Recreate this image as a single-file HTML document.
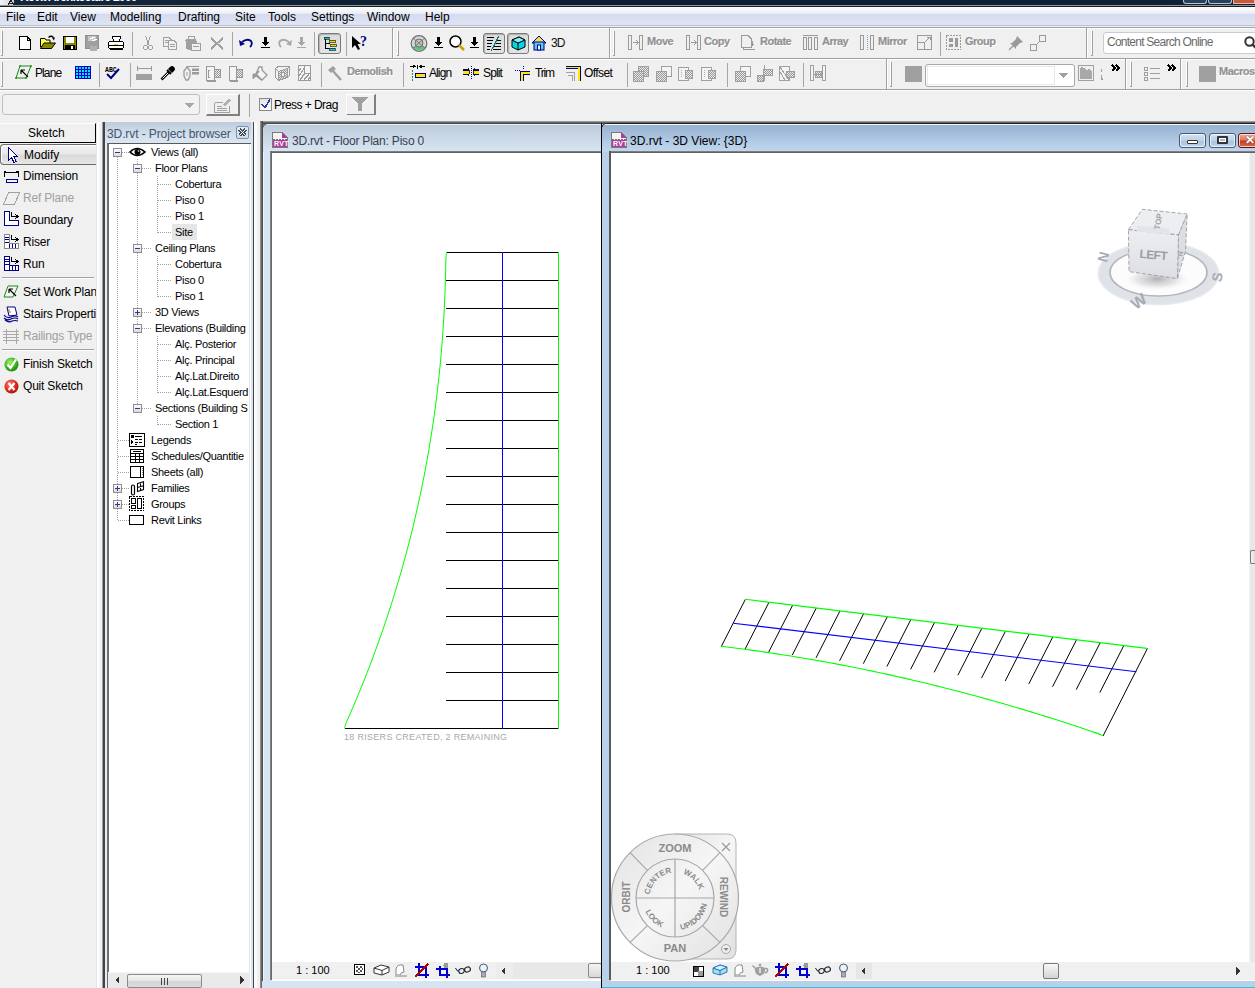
<!DOCTYPE html>
<html><head><meta charset="utf-8">
<style>
*{margin:0;padding:0;box-sizing:border-box}
html,body{width:1255px;height:988px;overflow:hidden;background:#f0f0f0;font-family:"Liberation Sans",sans-serif;font-size:11px;color:#000;position:relative}
.a{position:absolute}
.t{position:absolute;white-space:nowrap;line-height:1}
svg.a{overflow:visible}
</style></head><body>
<svg width="0" height="0" style="position:absolute"><defs><pattern id="dith" width="2" height="2" patternUnits="userSpaceOnUse"><rect width="2" height="2" fill="#e8e8e8"/><rect width="1" height="1" fill="#9a9a9a"/><rect x="1" y="1" width="1" height="1" fill="#9a9a9a"/></pattern></defs></svg>
<div class="a" style="left:0px;top:0px;width:1255px;height:5px;background:linear-gradient(90deg,#13263a,#0f2034 40%,#0d1f33 70%,#102338)"></div>
<div class="a" style="left:0px;top:0px;width:14px;height:5px;background:linear-gradient(90deg,#f4f4f4,#d0d0d0)"></div>
<svg class="a" style="left:5px;top:0px;" width="9" height="5" viewBox="0 0 9 5" shape-rendering="crispEdges"><path d="M3,5 L6,0 L9,5 M4,3 H8" stroke="#202020" fill="none"/></svg>
<div class="t" style="left:20px;top:-9px;font-size:12px;color:#fff;font-weight:bold;letter-spacing:-0.7px">Revit Architecture 2009</div>
<div class="a" style="left:0px;top:5px;width:1255px;height:1px;background:#8e989f"></div>
<div class="a" style="left:0px;top:6px;width:1255px;height:1px;background:#1c1c1c"></div>
<div class="a" style="left:1183px;top:0px;width:24px;height:4px;background:#28405c;border:1px solid #b8c4d0;border-top:none;border-radius:0 0 3px 3px"></div>
<div class="a" style="left:1208px;top:0px;width:24px;height:4px;background:#28405c;border:1px solid #b8c4d0;border-top:none;border-radius:0 0 3px 3px"></div>
<div class="a" style="left:1233px;top:0px;width:22px;height:4px;background:#c85a3a;border:1px solid #e8c0b0;border-top:none"></div>
<div class="a" style="left:0px;top:7px;width:1255px;height:7px;background:linear-gradient(#ffffff,#f4f6fb 50%,#e6eaf5)"></div>
<div class="a" style="left:0px;top:14px;width:1255px;height:11px;background:linear-gradient(#d5dbee,#dfe5f4)"></div>
<div class="a" style="left:0px;top:25px;width:1255px;height:1px;background:#b9c0d2"></div>
<div class="a" style="left:0px;top:26px;width:1255px;height:1px;background:#f0f0f0"></div>
<div class="a" style="left:0px;top:27px;width:1255px;height:1px;background:#a0a0a0"></div>
<div class="a" style="left:0px;top:28px;width:1255px;height:1px;background:#ffffff"></div>
<div class="t" style="left:6px;top:11px;font-size:12px;">File</div>
<div class="t" style="left:37px;top:11px;font-size:12px;">Edit</div>
<div class="t" style="left:70px;top:11px;font-size:12px;">View</div>
<div class="t" style="left:110px;top:11px;font-size:12px;">Modelling</div>
<div class="t" style="left:178px;top:11px;font-size:12px;">Drafting</div>
<div class="t" style="left:235px;top:11px;font-size:12px;">Site</div>
<div class="t" style="left:268px;top:11px;font-size:12px;">Tools</div>
<div class="t" style="left:311px;top:11px;font-size:12px;">Settings</div>
<div class="t" style="left:367px;top:11px;font-size:12px;">Window</div>
<div class="t" style="left:425px;top:11px;font-size:12px;">Help</div>
<div class="a" style="left:0px;top:58px;width:1255px;height:1px;background:#a0a0a0"></div>
<div class="a" style="left:0px;top:59px;width:1255px;height:1px;background:#ffffff"></div>
<div class="a" style="left:0px;top:89px;width:1255px;height:1px;background:#a0a0a0"></div>
<div class="a" style="left:0px;top:90px;width:1255px;height:1px;background:#ffffff"></div>
<div class="a" style="left:1px;top:31px;width:1px;height:25px;background:#fff"></div>
<div class="a" style="left:2px;top:31px;width:1px;height:25px;background:#a0a0a0"></div>
<div class="a" style="left:1px;top:55px;width:2px;height:1px;background:#a0a0a0"></div>
<svg class="a" style="left:19px;top:36px;" width="12" height="14" viewBox="0 0 12 14" shape-rendering="crispEdges"><path d="M0.5,0.5 H8 L11.5,4 V13.5 H0.5 Z" fill="#fff" stroke="#000"/><path d="M8,0.5 V4 H11.5" fill="none" stroke="#000"/></svg>
<svg class="a" style="left:40px;top:35px;" width="16" height="15" viewBox="0 0 16 15"><path d="M0.5,3.5 H5 L6,5 H10 V9 L0.5,12 Z" fill="#ffff50" stroke="#000"/><path d="M0.5,13.5 L4,8 H15.5 L11.5,13.5 Z" fill="#8a8a00" stroke="#000" stroke-linejoin="round"/><path d="M8.5,2.5 Q11,0 13.5,2.5" fill="none" stroke="#000" stroke-width="1.2"/><path d="M12,2.5 L15,2.5 L13.8,5.5 Z" fill="#000"/></svg>
<svg class="a" style="left:63px;top:36px;" width="15" height="15" viewBox="0 0 15 15" shape-rendering="crispEdges"><rect x="0.5" y="0.5" width="13" height="13" fill="#8a8a00" stroke="#000"/><rect x="3" y="1" width="8" height="6" fill="#fff"/><rect x="2" y="9" width="10" height="5" fill="#000"/><rect x="8" y="10" width="2" height="3" fill="#fff"/></svg>
<svg class="a" style="left:85px;top:35px;" width="16" height="17" viewBox="0 0 16 17" shape-rendering="crispEdges"><rect x="0.5" y="0.5" width="13" height="13" fill="#a0a0a0" stroke="#909090"/><rect x="3" y="1" width="8" height="5" fill="#c8c8c8"/><path d="M5,4 L10,2 M7,6 L12,4" stroke="#fff"/><rect x="5" y="11" width="7" height="5" fill="#b0b0b0"/></svg>
<svg class="a" style="left:108px;top:36px;" width="17" height="15" viewBox="0 0 17 15" shape-rendering="crispEdges"><path d="M4.5,0.5 H12.5 L11.5,5.5 H5.5 Z" fill="#fff" stroke="#000"/><rect x="0.5" y="5.5" width="15" height="7" rx="2" fill="#fff" stroke="#000"/><rect x="1" y="9" width="15" height="1" fill="#000"/><rect x="6" y="8" width="4" height="1" fill="#e8d000"/><rect x="2" y="12" width="13" height="2" fill="#000"/></svg>
<div class="a" style="left:132px;top:32px;width:1px;height:24px;background:#a7a7a7"></div>
<svg class="a" style="left:143px;top:36px;" width="10" height="15" viewBox="0 0 10 15" shape-rendering="crispEdges"><path d="M2.5,0 L6,9 M7.5,0 L4,9" stroke="#a0a0a0"/><circle cx="2.5" cy="11.5" r="2" fill="none" stroke="#a0a0a0"/><circle cx="7.5" cy="11.5" r="2" fill="none" stroke="#a0a0a0"/></svg>
<svg class="a" style="left:163px;top:37px;" width="15" height="13" viewBox="0 0 15 13" shape-rendering="crispEdges"><path d="M0.5,0.5 H6 L8,2.5 V9.5 H0.5 Z" fill="#f0f0f0" stroke="#a0a0a0"/><path d="M5.5,3.5 H11 L13.5,6 V12.5 H5.5 Z" fill="#f0f0f0" stroke="#a0a0a0"/><path d="M2,3.5 H5 M2,5.5 H5 M7,7.5 H12 M7,9.5 H12" stroke="#a0a0a0"/></svg>
<svg class="a" style="left:185px;top:36px;" width="16" height="15" viewBox="0 0 16 15" shape-rendering="crispEdges"><rect x="0.5" y="2.5" width="11" height="11" rx="2" fill="#a0a0a0"/><rect x="3" y="0.5" width="6" height="3" fill="#f0f0f0" stroke="#a0a0a0"/><rect x="6.5" y="7.5" width="9" height="7" fill="#f0f0f0" stroke="#a0a0a0"/><path d="M8,10.5 H14" stroke="#a0a0a0"/></svg>
<svg class="a" style="left:210px;top:37px;" width="14" height="13" viewBox="0 0 14 13" shape-rendering="crispEdges"><path d="M1,1 L13,12 M13,1 L1,12" stroke="#a0a0a0" stroke-width="2"/></svg>
<div class="a" style="left:232px;top:32px;width:1px;height:24px;background:#a7a7a7"></div>
<svg class="a" style="left:239px;top:38px;" width="15" height="10" viewBox="0 0 15 10"><path d="M3,4 Q8,0 12,3 Q14,6 11,9" fill="none" stroke="#00008a" stroke-width="1.8"/><path d="M0,2 L1,8 L6,6 Z" fill="#00008a"/></svg>
<svg class="a" style="left:261px;top:37px;" width="9" height="12" viewBox="0 0 9 12" shape-rendering="crispEdges"><rect x="3" y="0" width="3" height="5" fill="#000"/><path d="M0.5,5 H8.5 L4.5,9 Z" fill="#000"/><rect x="0" y="10" width="9" height="1" fill="#000"/></svg>
<svg class="a" style="left:277px;top:38px;" width="15" height="10" viewBox="0 0 15 10"><path d="M12,4 Q7,0 3,3 Q1,6 4,9" fill="none" stroke="#a8a8a8" stroke-width="1.8"/><path d="M15,2 L14,8 L9,6 Z" fill="#a8a8a8"/></svg>
<svg class="a" style="left:297px;top:37px;" width="9" height="12" viewBox="0 0 9 12" shape-rendering="crispEdges"><rect x="3" y="0" width="3" height="5" fill="#a8a8a8"/><path d="M0.5,5 H8.5 L4.5,9 Z" fill="#a8a8a8"/><rect x="0" y="10" width="9" height="1" fill="#a8a8a8"/></svg>
<div class="a" style="left:314px;top:32px;width:1px;height:24px;background:#a7a7a7"></div>
<div class="a" style="left:318px;top:33px;width:23px;height:21px;background:linear-gradient(#dcdcdc,#e4e4e4);border:1px solid #7a7a7a;border-radius:3px;box-shadow:inset 1px 1px 1px #b0b0b0"></div>
<svg class="a" style="left:322px;top:36px;" width="16" height="15" viewBox="0 0 16 15" shape-rendering="crispEdges"><path d="M3.5,2 V13 M3.5,7.5 H8 M3.5,12.5 H8" stroke="#000"/><rect x="2" y="1" width="5" height="2" fill="#00c8e8" stroke="#000" stroke-width="0.6"/><rect x="7" y="4" width="6" height="2" fill="#e8e800" stroke="#000" stroke-width="0.6"/><rect x="8" y="8" width="6" height="2" fill="#e8e800" stroke="#000" stroke-width="0.6"/><rect x="7" y="12" width="6" height="2" fill="#00c8e8" stroke="#000" stroke-width="0.6"/></svg>
<div class="a" style="left:346px;top:32px;width:1px;height:24px;background:#a7a7a7"></div>
<svg class="a" style="left:351px;top:35px;" width="19" height="16" viewBox="0 0 19 16"><path d="M1,1 L1,13 L4,10 L7,15 L9,14 L6.5,9 L10,9 Z" fill="#000"/><text x="9" y="11" font-family="Liberation Serif" font-weight="bold" font-size="14" fill="#00008a">?</text></svg>
<div class="a" style="left:392px;top:28px;width:1px;height:30px;background:#a0a0a0"></div>
<div class="a" style="left:393px;top:28px;width:1px;height:30px;background:#fff"></div>
<div class="a" style="left:397px;top:31px;width:1px;height:25px;background:#fff"></div>
<div class="a" style="left:398px;top:31px;width:1px;height:25px;background:#a0a0a0"></div>
<div class="a" style="left:397px;top:55px;width:2px;height:1px;background:#a0a0a0"></div>
<svg class="a" style="left:410px;top:35px;" width="18" height="17" viewBox="0 0 18 17"><circle cx="9" cy="8.5" r="7.8" fill="#d8d8d8" stroke="#707070" stroke-width="1.2"/><path d="M3,13 Q9,17 15,13 L13,11 Q9,13 5,11 Z" fill="#50c878"/><circle cx="9" cy="8" r="4" fill="#c0c0c0" stroke="#707070"/><path d="M3,3 L15,13 M15,3 L3,13" stroke="#707070" stroke-width="0.8"/></svg>
<svg class="a" style="left:434px;top:37px;" width="9" height="12" viewBox="0 0 9 12" shape-rendering="crispEdges"><rect x="3" y="0" width="3" height="5" fill="#000"/><path d="M0.5,5 H8.5 L4.5,9 Z" fill="#000"/><rect x="0" y="10" width="9" height="1" fill="#000"/></svg>
<svg class="a" style="left:449px;top:35px;" width="16" height="16" viewBox="0 0 16 16"><circle cx="6.5" cy="6.5" r="5.5" fill="#fff" stroke="#000" stroke-width="1.5"/><path d="M10,10 L15,15" stroke="#c8a000" stroke-width="2.5"/></svg>
<svg class="a" style="left:470px;top:37px;" width="9" height="12" viewBox="0 0 9 12" shape-rendering="crispEdges"><rect x="3" y="0" width="3" height="5" fill="#000"/><path d="M0.5,5 H8.5 L4.5,9 Z" fill="#000"/><rect x="0" y="10" width="9" height="1" fill="#000"/></svg>
<div class="a" style="left:483px;top:33px;width:22px;height:21px;background:linear-gradient(#dcdcdc,#e4e4e4);border:1px solid #7a7a7a;border-radius:3px;box-shadow:inset 1px 1px 1px #b0b0b0"></div>
<svg class="a" style="left:487px;top:36px;" width="15" height="15" viewBox="0 0 15 15" shape-rendering="crispEdges"><path d="M0,1.5 H7 M0,4.5 H6 M0,7.5 H5 M0,10.5 H4 M0,13.5 H3 M9,4.5 H14 M8,7.5 H14 M7,10.5 H14 M6,13.5 H14" stroke="#000" stroke-width="1.2"/><path d="M12,0 L4,15" stroke="#1a7a7a" stroke-width="1.2"/></svg>
<div class="a" style="left:507px;top:33px;width:22px;height:21px;background:linear-gradient(#dcdcdc,#e4e4e4);border:1px solid #7a7a7a;border-radius:3px;box-shadow:inset 1px 1px 1px #b0b0b0"></div>
<svg class="a" style="left:511px;top:36px;" width="15" height="15" viewBox="0 0 15 15"><path d="M1,4 L8,1 L14,4 L14,11 L7,14 L1,11 Z" fill="#00d8e8" stroke="#000"/><path d="M1,4 L7,7 L14,4 M7,7 V14" fill="none" stroke="#000"/><path d="M1,4 L8,1 L14,4 L7,7 Z" fill="#7ff0f8" stroke="#000"/></svg>
<svg class="a" style="left:531px;top:35px;" width="16" height="17" viewBox="0 0 16 17"><path d="M1,8 L8,1 L15,8 Z" fill="#f0e060" stroke="#00008a"/><rect x="3" y="7" width="10" height="8" fill="#58c8f0" stroke="#00008a"/><rect x="6.5" y="10" width="3" height="5" fill="#fff" stroke="#00008a"/></svg>
<div class="t" style="left:551px;top:37px;font-size:12px;color:#111;letter-spacing:-1px">3D</div>
<div class="a" style="left:609px;top:28px;width:1px;height:30px;background:#a0a0a0"></div>
<div class="a" style="left:610px;top:28px;width:1px;height:30px;background:#fff"></div>
<div class="a" style="left:613px;top:31px;width:1px;height:25px;background:#fff"></div>
<div class="a" style="left:614px;top:31px;width:1px;height:25px;background:#a0a0a0"></div>
<div class="a" style="left:613px;top:55px;width:2px;height:1px;background:#a0a0a0"></div>
<svg class="a" style="left:628px;top:35px;" width="16" height="16" viewBox="0 0 16 16" shape-rendering="crispEdges"><rect x="0.5" y="0.5" width="3" height="14" fill="#f0f0f0" stroke="#9a9a9a"/><rect x="11.5" y="0.5" width="3" height="14" fill="#f0f0f0" stroke="#9a9a9a"/><path d="M5,7.5 H10 M8,5 L10,7.5 L8,10" fill="none" stroke="#9a9a9a"/></svg>
<div class="t" style="left:647px;top:36px;font-size:11px;color:#929292;font-weight:bold;letter-spacing:-0.5px;-webkit-text-stroke:0.2px #929292;text-shadow:1px 1px 0 #fff">Move</div>
<svg class="a" style="left:686px;top:35px;" width="16" height="16" viewBox="0 0 16 16" shape-rendering="crispEdges"><rect x="0.5" y="0.5" width="3" height="14" fill="#f0f0f0" stroke="#9a9a9a"/><rect x="11.5" y="0.5" width="3" height="14" fill="#f0f0f0" stroke="#9a9a9a"/><path d="M5,7.5 H10 M8,5 L10,7.5 L8,10" fill="none" stroke="#9a9a9a"/></svg>
<div class="t" style="left:704px;top:36px;font-size:11px;color:#929292;font-weight:bold;letter-spacing:-0.5px;-webkit-text-stroke:0.2px #929292;text-shadow:1px 1px 0 #fff">Copy</div>
<svg class="a" style="left:741px;top:35px;" width="16" height="16" viewBox="0 0 16 16" shape-rendering="crispEdges"><path d="M0.5,0.5 H7 L10.5,4 V12.5 H0.5 Z" fill="#f0f0f0" stroke="#9a9a9a"/><path d="M2.5,12.5 V14.5 H13.5" fill="none" stroke="#9a9a9a"/><path d="M11,6 V11 L13,9" fill="none" stroke="#9a9a9a"/></svg>
<div class="t" style="left:760px;top:36px;font-size:11px;color:#929292;font-weight:bold;letter-spacing:-0.5px;-webkit-text-stroke:0.2px #929292;text-shadow:1px 1px 0 #fff">Rotate</div>
<svg class="a" style="left:803px;top:35px;" width="16" height="16" viewBox="0 0 16 16" shape-rendering="crispEdges"><rect x="0.5" y="2.5" width="3" height="12" fill="#f0f0f0" stroke="#9a9a9a"/><rect x="5.5" y="2.5" width="3" height="12" fill="#f0f0f0" stroke="#9a9a9a"/><rect x="11.5" y="2.5" width="3" height="12" fill="#f0f0f0" stroke="#9a9a9a"/><path d="M0,0.5 H15" stroke="#9a9a9a"/></svg>
<div class="t" style="left:822px;top:36px;font-size:11px;color:#929292;font-weight:bold;letter-spacing:-0.5px;-webkit-text-stroke:0.2px #929292;text-shadow:1px 1px 0 #fff">Array</div>
<svg class="a" style="left:860px;top:35px;" width="15" height="16" viewBox="0 0 15 16" shape-rendering="crispEdges"><rect x="0.5" y="0.5" width="3" height="14" fill="#f0f0f0" stroke="#9a9a9a"/><rect x="10.5" y="0.5" width="3" height="14" fill="#f0f0f0" stroke="#9a9a9a"/><path d="M7,0 V15" stroke="#9a9a9a" stroke-dasharray="1,1"/></svg>
<div class="t" style="left:878px;top:36px;font-size:11px;color:#929292;font-weight:bold;letter-spacing:-0.5px;-webkit-text-stroke:0.2px #929292;text-shadow:1px 1px 0 #fff">Mirror</div>
<svg class="a" style="left:917px;top:35px;" width="16" height="16" viewBox="0 0 16 16" shape-rendering="crispEdges"><rect x="0.5" y="0.5" width="14" height="14" fill="none" stroke="#9a9a9a"/><path d="M0.5,7.5 H7.5 V14.5" fill="none" stroke="#9a9a9a"/><path d="M8,7 L13,2 M10,2 H13 V5" fill="none" stroke="#9a9a9a"/></svg>
<div class="a" style="left:940px;top:32px;width:1px;height:24px;background:#a7a7a7"></div>
<svg class="a" style="left:946px;top:35px;" width="16" height="16" viewBox="0 0 16 16" shape-rendering="crispEdges"><rect x="0.5" y="0.5" width="14" height="14" fill="none" stroke="#9a9a9a" stroke-dasharray="2,1"/><rect x="3" y="3" width="4" height="4" fill="#9a9a9a"/><rect x="3" y="9" width="4" height="3" fill="#9a9a9a"/><rect x="9" y="3" width="3" height="9" fill="#9a9a9a"/></svg>
<div class="t" style="left:965px;top:36px;font-size:11px;color:#929292;font-weight:bold;letter-spacing:-0.5px;-webkit-text-stroke:0.2px #929292;text-shadow:1px 1px 0 #fff">Group</div>
<svg class="a" style="left:1008px;top:35px;" width="16" height="16" viewBox="0 0 16 16"><path d="M9,1 L15,7 L12,8 L8,12 L8,14 L2,8 L4,8 L8,4 Z" fill="#9a9a9a"/><path d="M5,11 L1,15" stroke="#9a9a9a" stroke-width="1.2"/></svg>
<svg class="a" style="left:1030px;top:35px;" width="17" height="17" viewBox="0 0 17 17" shape-rendering="crispEdges"><rect x="0.5" y="9.5" width="6" height="6" fill="#f0f0f0" stroke="#9a9a9a"/><rect x="9.5" y="0.5" width="6" height="6" fill="#f0f0f0" stroke="#9a9a9a"/><path d="M6,10 L10,6" stroke="#9a9a9a"/></svg>
<div class="a" style="left:1086px;top:28px;width:1px;height:30px;background:#a0a0a0"></div>
<div class="a" style="left:1087px;top:28px;width:1px;height:30px;background:#fff"></div>
<div class="a" style="left:1091px;top:31px;width:1px;height:25px;background:#fff"></div>
<div class="a" style="left:1092px;top:31px;width:1px;height:25px;background:#a0a0a0"></div>
<div class="a" style="left:1091px;top:55px;width:2px;height:1px;background:#a0a0a0"></div>
<div class="a" style="left:1103px;top:32px;width:160px;height:22px;background:#fff;border:1px solid #c8ccd4;border-radius:3px"></div>
<div class="t" style="left:1107px;top:36px;font-size:12px;color:#6a6a6a;letter-spacing:-0.75px">Content Search Online</div>
<svg class="a" style="left:1244px;top:36px;" width="14" height="14" viewBox="0 0 14 14"><circle cx="5.5" cy="5.5" r="4.2" fill="none" stroke="#333" stroke-width="2"/><path d="M8.5,8.5 L13,13" stroke="#333" stroke-width="2.4"/></svg>
<div class="a" style="left:1px;top:62px;width:1px;height:25px;background:#fff"></div>
<div class="a" style="left:2px;top:62px;width:1px;height:25px;background:#a0a0a0"></div>
<div class="a" style="left:1px;top:86px;width:2px;height:1px;background:#a0a0a0"></div>
<svg class="a" style="left:15px;top:65px;" width="17" height="14" viewBox="0 0 17 14"><path d="M5,1 L16,1 L11,13 L1,13 Z" fill="none" stroke="#1a8a1a" stroke-width="1"/><circle cx="5" cy="1" r="0.9" fill="#1a8a1a"/><circle cx="16" cy="1" r="0.9" fill="#1a8a1a"/><circle cx="11" cy="13" r="0.9" fill="#1a8a1a"/><circle cx="1" cy="13" r="0.9" fill="#1a8a1a"/><path d="M6,5 L13,12 M6,5 L6,9 M6,5 L10,5" stroke="#000" stroke-width="1.2" fill="none"/></svg>
<div class="t" style="left:35px;top:67px;font-size:12px;letter-spacing:-0.9px">Plane</div>
<svg class="a" style="left:75px;top:66px;" width="16" height="13" viewBox="0 0 16 13" shape-rendering="crispEdges"><rect x="0" y="0" width="16" height="13" fill="#00e8ff"/><path d="M0,0.5 H16 M0,3.5 H16 M0,6.5 H16 M0,9.5 H16 M0,12.5 H16 M0.5,0 V13 M3.5,0 V13 M6.5,0 V13 M9.5,0 V13 M12.5,0 V13 M15.5,0 V13" stroke="#0000c8"/></svg>
<div class="a" style="left:99px;top:63px;width:1px;height:24px;background:#a7a7a7"></div>
<svg class="a" style="left:105px;top:66px;" width="16" height="14" viewBox="0 0 16 14"><text x="0" y="5.5" font-family="Liberation Mono" font-size="6.5" font-weight="bold" fill="#000">ABC</text><path d="M2,8 L6,12 L14,3" fill="none" stroke="#00008a" stroke-width="2"/></svg>
<div class="a" style="left:130px;top:63px;width:1px;height:24px;background:#a7a7a7"></div>
<svg class="a" style="left:136px;top:66px;" width="17" height="15" viewBox="0 0 17 15" shape-rendering="crispEdges"><path d="M1,0 V5 M15,0 V5 M1,2.5 H15" stroke="#9a9a9a"/><rect x="0" y="8" width="16" height="6" fill="#a0a0a0"/></svg>
<svg class="a" style="left:160px;top:65px;" width="16" height="16" viewBox="0 0 16 16"><path d="M1.5,14.5 L9,7" stroke="#000" stroke-width="2.6"/><path d="M2.5,13.5 L8.5,7.5" stroke="#fff" stroke-width="1"/><path d="M10,2 Q12,0 14,2 Q16,4 14,6 L12,8 L8,4 Z" fill="#000"/><path d="M7,5 L11,9" stroke="#000" stroke-width="2"/></svg>
<svg class="a" style="left:183px;top:65px;" width="16" height="17" viewBox="0 0 16 17"><path d="M4,2 L7,6 L7,11 L5,15 L3,15 L1,11 L1,6 Z" fill="#f4f4f4" stroke="#9a9a9a" stroke-width="1.3"/><path d="M4,7 V11" stroke="#9a9a9a"/><path d="M3.5,1.5 H16" stroke="#9a9a9a"/><rect x="9" y="3.5" width="7" height="2.5" fill="#9a9a9a"/><rect x="9" y="7" width="7" height="2.5" fill="#9a9a9a"/></svg>
<svg class="a" style="left:206px;top:66px;" width="15" height="16" viewBox="0 0 15 16" shape-rendering="crispEdges"><rect x="0.5" y="0.5" width="8" height="14" fill="#f4f4f4" stroke="#9a9a9a"/><rect x="1" y="14" width="9" height="1.5" fill="#9a9a9a"/><path d="M3.5,4 H2.5 V11 H3.5" fill="none" stroke="#9a9a9a"/><rect x="8.5" y="3.5" width="6" height="8" fill="url(#dith)" stroke="#9a9a9a"/></svg>
<svg class="a" style="left:229px;top:66px;" width="15" height="16" viewBox="0 0 15 16" shape-rendering="crispEdges"><rect x="0.5" y="0.5" width="7" height="14" fill="#f4f4f4" stroke="#9a9a9a"/><rect x="1" y="14" width="8" height="1.5" fill="#9a9a9a"/><rect x="7.5" y="3.5" width="6" height="8" fill="url(#dith)" stroke="#9a9a9a"/></svg>
<svg class="a" style="left:252px;top:65px;" width="16" height="17" viewBox="0 0 16 17"><path d="M7,2 L10,2 L10,5 L15,10 L10,15 L4,9 Z" fill="#f4f4f4" stroke="#9a9a9a" stroke-width="1.3"/><path d="M4,9 L1,9 L1,14 L4,11 L9,15 L10,15" fill="#9a9a9a" stroke="#9a9a9a"/><path d="M4,9 L7,6" stroke="#9a9a9a" stroke-width="2"/></svg>
<svg class="a" style="left:275px;top:65px;" width="16" height="17" viewBox="0 0 16 17" shape-rendering="crispEdges"><path d="M0.5,3.5 L3.5,6.5 V15.5 L0.5,12.5 Z" fill="#f4f4f4" stroke="#9a9a9a"/><path d="M3.5,6.5 L12.5,3.5 V12.5 L3.5,15.5 Z" fill="url(#dith)" stroke="#9a9a9a"/><path d="M12.5,3.5 L14.5,1.5 V10.5 L12.5,12.5" fill="#f4f4f4" stroke="#9a9a9a"/><path d="M0.5,3.5 L3,1.5 L14.5,1.5" fill="none" stroke="#9a9a9a"/><rect x="6.5" y="7.5" width="3" height="4" fill="#f4f4f4" stroke="#9a9a9a"/></svg>
<svg class="a" style="left:298px;top:65px;" width="15" height="17" viewBox="0 0 15 17" shape-rendering="crispEdges"><rect x="0.5" y="0.5" width="12" height="15" fill="#f4f4f4" stroke="#9a9a9a" stroke-width="1.2"/><path d="M6.5,1 V8.5 H12" fill="none" stroke="#9a9a9a"/><path d="M1,6 L3,3 M1,11 L6,3.5 M2,15 L7,8 M6,15 L11,9 M10,15 L12,12" stroke="#9a9a9a" stroke-width="1.2"/></svg>
<div class="a" style="left:321px;top:63px;width:1px;height:24px;background:#a7a7a7"></div>
<svg class="a" style="left:327px;top:66px;" width="15" height="15" viewBox="0 0 15 15"><path d="M1,4 L6,0 L9,3 L4,7 Z" fill="#a0a0a0"/><path d="M6,5 L14,14" stroke="#a0a0a0" stroke-width="2.5"/></svg>
<div class="t" style="left:347px;top:66px;font-size:11px;color:#929292;font-weight:bold;letter-spacing:-0.5px;-webkit-text-stroke:0.2px #929292;text-shadow:1px 1px 0 #fff">Demolish</div>
<div class="a" style="left:403px;top:63px;width:1px;height:24px;background:#a7a7a7"></div>
<svg class="a" style="left:410px;top:65px;" width="16" height="16" viewBox="0 0 16 16" shape-rendering="crispEdges"><path d="M0,1.5 H5 M3,0 L5,1.5 L3,3 M15,1.5 H10 M12,0 L10,1.5 L12,3 M7.5,0 V4" fill="none" stroke="#000"/><rect x="5.5" y="8.5" width="10" height="4" fill="#ffe800" stroke="#00008a"/><path d="M2.5,5 V16" stroke="#1a9a1a" stroke-dasharray="2,1"/></svg>
<div class="t" style="left:429px;top:67px;font-size:12px;letter-spacing:-0.9px">Align</div>
<svg class="a" style="left:463px;top:66px;" width="17" height="14" viewBox="0 0 17 14" shape-rendering="crispEdges"><rect x="0" y="3" width="6" height="2" fill="#00008a"/><rect x="0" y="5" width="6" height="3" fill="#ffe800"/><rect x="0" y="8" width="6" height="1" fill="#00008a"/><rect x="10" y="3" width="6" height="2" fill="#00008a"/><rect x="10" y="5" width="6" height="3" fill="#ffe800"/><rect x="10" y="8" width="6" height="1" fill="#00008a"/><path d="M8.5,0 V14" stroke="#00008a" stroke-dasharray="1,1"/><path d="M5,2 L7,6 L5,10 M12,2 L10,6 L12,10" fill="none" stroke="#000" stroke-width="0.8"/></svg>
<div class="t" style="left:483px;top:67px;font-size:12px;letter-spacing:-0.85px">Split</div>
<svg class="a" style="left:515px;top:66px;" width="16" height="16" viewBox="0 0 16 16" shape-rendering="crispEdges"><path d="M0,4.5 H5 M8.5,0 V4" stroke="#00008a" stroke-dasharray="1,1"/><path d="M5,5 H15 V8 H8 V15 H5 Z" fill="#ffe800"/><path d="M5,5.5 H15 M5.5,5 V15 M8,8.5 H15 M8.5,8 V15" stroke="#00008a"/></svg>
<div class="t" style="left:535px;top:67px;font-size:12px;letter-spacing:-1.2px">Trim</div>
<svg class="a" style="left:566px;top:66px;" width="15" height="16" viewBox="0 0 15 16" shape-rendering="crispEdges"><path d="M0,0.5 H14.5 V15 M0,2.5 H12.5 V15" fill="none" stroke="#00008a" stroke-width="1"/><rect x="0" y="1" width="13" height="1" fill="#ffe800"/><rect x="12" y="1" width="2" height="14" fill="#ffe800"/><path d="M0,6.5 H8.5 V15 M2,9.5 H6.5 V15" fill="none" stroke="#a0a0a0" stroke-width="1.5"/></svg>
<div class="t" style="left:584px;top:67px;font-size:12px;letter-spacing:-0.6px">Offset</div>
<div class="a" style="left:627px;top:63px;width:1px;height:24px;background:#a7a7a7"></div>
<svg class="a" style="left:633px;top:66px;" width="16" height="16" viewBox="0 0 16 16" shape-rendering="crispEdges"><rect x="5.5" y="0.5" width="10" height="10" fill="url(#dith)" stroke="#a0a0a0"/><rect x="0.5" y="5.5" width="10" height="10" fill="url(#dith)" stroke="#a0a0a0"/></svg>
<svg class="a" style="left:656px;top:66px;" width="16" height="16" viewBox="0 0 16 16" shape-rendering="crispEdges"><rect x="5.5" y="0.5" width="10" height="10" fill="#f4f4f4" stroke="#a0a0a0"/><rect x="0.5" y="5.5" width="10" height="10" fill="url(#dith)" stroke="#a0a0a0"/></svg>
<svg class="a" style="left:678px;top:66px;" width="16" height="16" viewBox="0 0 16 16" shape-rendering="crispEdges"><rect x="0.5" y="1.5" width="10" height="13" fill="#f4f4f4" stroke="#a0a0a0"/><rect x="7.5" y="4.5" width="7" height="8" fill="url(#dith)" stroke="#a0a0a0"/><path d="M3.5,4 V12" stroke="#b0b0b0" stroke-dasharray="1,1"/></svg>
<svg class="a" style="left:701px;top:66px;" width="16" height="16" viewBox="0 0 16 16" shape-rendering="crispEdges"><rect x="0.5" y="1.5" width="10" height="13" fill="#f4f4f4" stroke="#a0a0a0"/><rect x="7.5" y="4.5" width="7" height="8" fill="url(#dith)" stroke="#a0a0a0"/><path d="M3.5,4 V12" stroke="#b0b0b0" stroke-dasharray="1,1"/></svg>
<div class="a" style="left:727px;top:63px;width:1px;height:24px;background:#a7a7a7"></div>
<svg class="a" style="left:735px;top:66px;" width="16" height="16" viewBox="0 0 16 16" shape-rendering="crispEdges"><rect x="5.5" y="0.5" width="10" height="10" fill="#f4f4f4" stroke="#a0a0a0"/><rect x="0.5" y="5.5" width="10" height="10" fill="url(#dith)" stroke="#a0a0a0"/></svg>
<svg class="a" style="left:757px;top:65px;" width="16" height="17" viewBox="0 0 16 17" shape-rendering="crispEdges"><path d="M7.5,0 V16" stroke="#a0a0a0"/><rect x="6.5" y="4.5" width="9" height="6" fill="url(#dith)" stroke="#a0a0a0"/><rect x="0.5" y="10.5" width="6" height="6" fill="url(#dith)" stroke="#a0a0a0"/></svg>
<svg class="a" style="left:779px;top:66px;" width="16" height="16" viewBox="0 0 16 16" shape-rendering="crispEdges"><rect x="0.5" y="0.5" width="10" height="14" fill="#f4f4f4" stroke="#a0a0a0"/><path d="M1,1 L10,14 M1,6 L6,14" stroke="#a0a0a0"/><rect x="7.5" y="5.5" width="8" height="6" fill="url(#dith)" stroke="#a0a0a0"/></svg>
<div class="a" style="left:803px;top:63px;width:1px;height:24px;background:#a7a7a7"></div>
<svg class="a" style="left:810px;top:65px;" width="17" height="17" viewBox="0 0 17 17" shape-rendering="crispEdges"><rect x="0.5" y="0.5" width="3" height="15" fill="#f4f4f4" stroke="#a0a0a0"/><rect x="12.5" y="0.5" width="3" height="15" fill="#f4f4f4" stroke="#a0a0a0"/><rect x="5.5" y="6.5" width="6" height="6" fill="url(#dith)" stroke="#a0a0a0"/><path d="M4,9.5 H12" stroke="#a0a0a0"/></svg>
<div class="a" style="left:886px;top:59px;width:1px;height:30px;background:#a0a0a0"></div>
<div class="a" style="left:887px;top:59px;width:1px;height:30px;background:#fff"></div>
<div class="a" style="left:890px;top:62px;width:1px;height:25px;background:#fff"></div>
<div class="a" style="left:891px;top:62px;width:1px;height:25px;background:#a0a0a0"></div>
<div class="a" style="left:890px;top:86px;width:2px;height:1px;background:#a0a0a0"></div>
<div class="a" style="left:905px;top:66px;width:17px;height:16px;background:#a0a0a0"></div>
<div class="a" style="left:925px;top:64px;width:150px;height:23px;background:#fff;border:1px solid #a8a8a8;border-radius:3px"></div>
<div class="a" style="left:927px;top:66px;width:128px;height:19px;background:#fff;border:1px solid #e8e8e8"></div>
<svg class="a" style="left:1058px;top:73px;" width="10" height="6" viewBox="0 0 10 6" shape-rendering="crispEdges"><path d="M0,0 H10 L5,5 Z" fill="#a0a0a0"/></svg>
<svg class="a" style="left:1078px;top:65px;" width="17" height="17" viewBox="0 0 17 17" shape-rendering="crispEdges"><rect x="0.5" y="0.5" width="15" height="15" fill="#f0f0f0" stroke="#a0a0a0"/><path d="M2,3 Q6,1 8,5 L12,4 L14,7 V14 H2 Z" fill="#a8a8a8"/></svg>
<svg class="a" style="left:1100px;top:69px;" width="4" height="12" viewBox="0 0 4 12" shape-rendering="crispEdges"><path d="M1.5,0 V3 M1.5,6 V11 M1,8 L3,11" stroke="#a0a0a0"/></svg>
<svg class="a" style="left:1111px;top:64px;" width="10" height="8" viewBox="0 0 10 8" shape-rendering="crispEdges"><path d="M1,1 L4,4 L1,7 M5,1 L8,4 L5,7" fill="none" stroke="#000" stroke-width="1.8"/></svg>
<div class="a" style="left:1125px;top:59px;width:1px;height:30px;background:#a0a0a0"></div>
<div class="a" style="left:1126px;top:59px;width:1px;height:30px;background:#fff"></div>
<div class="a" style="left:1130px;top:62px;width:1px;height:25px;background:#fff"></div>
<div class="a" style="left:1131px;top:62px;width:1px;height:25px;background:#a0a0a0"></div>
<div class="a" style="left:1130px;top:86px;width:2px;height:1px;background:#a0a0a0"></div>
<svg class="a" style="left:1144px;top:66px;" width="17" height="15" viewBox="0 0 17 15" shape-rendering="crispEdges"><rect x="0.5" y="1.5" width="3" height="3" fill="none" stroke="#a0a0a0"/><rect x="0.5" y="6.5" width="3" height="3" fill="none" stroke="#a0a0a0"/><rect x="0.5" y="11.5" width="3" height="3" fill="none" stroke="#a0a0a0"/><path d="M6,2.5 H16 M6,7.5 H16 M6,12.5 H16" stroke="#a0a0a0"/></svg>
<svg class="a" style="left:1167px;top:64px;" width="10" height="8" viewBox="0 0 10 8" shape-rendering="crispEdges"><path d="M1,1 L4,4 L1,7 M5,1 L8,4 L5,7" fill="none" stroke="#000" stroke-width="1.8"/></svg>
<div class="a" style="left:1180px;top:59px;width:1px;height:30px;background:#a0a0a0"></div>
<div class="a" style="left:1181px;top:59px;width:1px;height:30px;background:#fff"></div>
<div class="a" style="left:1186px;top:62px;width:1px;height:25px;background:#fff"></div>
<div class="a" style="left:1187px;top:62px;width:1px;height:25px;background:#a0a0a0"></div>
<div class="a" style="left:1186px;top:86px;width:2px;height:1px;background:#a0a0a0"></div>
<div class="a" style="left:1199px;top:66px;width:17px;height:16px;background:#a0a0a0"></div>
<div class="t" style="left:1219px;top:66px;font-size:11px;color:#929292;font-weight:bold;letter-spacing:-0.5px;-webkit-text-stroke:0.2px #929292;text-shadow:1px 1px 0 #fff">Macros</div>
<div class="a" style="left:2px;top:94px;width:198px;height:21px;background:#f2f2f2;border:1px solid #c0c0c0;border-radius:3px"></div>
<svg class="a" style="left:184px;top:103px;" width="10" height="6" viewBox="0 0 10 6" shape-rendering="crispEdges"><path d="M0,0 H10 L5,5 Z" fill="#a8a8a8"/></svg>
<div class="a" style="left:206px;top:94px;width:34px;height:22px;background:#f0f0f0;border-top:1px solid #fff;border-left:1px solid #fff;border-right:2px solid #808080;border-bottom:2px solid #808080"></div>
<svg class="a" style="left:214px;top:97px;" width="18" height="16" viewBox="0 0 18 16" shape-rendering="crispEdges"><path d="M0.5,5.5 H9 M0.5,5.5 V15.5 H15.5 V9" fill="none" stroke="#a0a0a0"/><path d="M8,8 L14,2 L17,3 L11,9 Z" fill="#b0b0b0"/><path d="M3,9.5 H8 M3,11.5 H13 M3,13.5 H13" stroke="#a0a0a0"/></svg>
<div class="a" style="left:249px;top:94px;width:1px;height:23px;background:#a7a7a7"></div>
<div class="a" style="left:259px;top:98px;width:13px;height:13px;background:linear-gradient(#e4e4e4,#fdfdfd);border:1px solid #8a8a8a"></div>
<svg class="a" style="left:261px;top:99px;" width="10" height="10" viewBox="0 0 10 10" shape-rendering="crispEdges"><path d="M1,5 L4,8.5 L9,0.5" fill="none" stroke="#2a3a9a" stroke-width="1.6"/></svg>
<div class="t" style="left:274px;top:99px;font-size:12px;letter-spacing:-0.55px">Press + Drag</div>
<div class="a" style="left:346px;top:94px;width:30px;height:22px;background:#f0f0f0;border-top:1px solid #fff;border-left:1px solid #fff;border-right:2px solid #808080;border-bottom:2px solid #808080"></div>
<svg class="a" style="left:352px;top:97px;" width="17" height="15" viewBox="0 0 17 15" shape-rendering="crispEdges"><path d="M0,0 H16 L10,7 V14 H6 V7 Z" fill="#a0a0a0"/></svg>
<div class="a" style="left:0px;top:123px;width:96px;height:20px;background:#f0f0f0;border-top:1px solid #fff;border-right:1px solid #000;border-bottom:1px solid #000"></div>
<div class="t" style="left:28px;top:127px;font-size:12px;">Sketch</div>
<div class="a" style="left:0px;top:144px;width:96px;height:21px;background:linear-gradient(#f4f4f4,#e8e8e8 45%,#dadada 55%,#e6e6e6);border:1px solid #6a6a6a;border-right:none;border-radius:4px 0 0 4px;box-shadow:inset 1px 1px 0 #fff"></div>
<div class="t" style="left:24px;top:149px;font-size:12px;">Modify</div>
<div class="a" style="left:0px;top:168px;width:96px;height:18px;overflow:hidden"><div class="t" style="left:23px;top:2px;font-size:12px;letter-spacing:-0.2px;color:#000">Dimension</div></div>
<div class="a" style="left:0px;top:190px;width:96px;height:18px;overflow:hidden"><div class="t" style="left:23px;top:2px;font-size:12px;letter-spacing:-0.2px;color:#a0a0a0">Ref Plane</div></div>
<div class="a" style="left:0px;top:212px;width:96px;height:18px;overflow:hidden"><div class="t" style="left:23px;top:2px;font-size:12px;letter-spacing:-0.2px;color:#000">Boundary</div></div>
<div class="a" style="left:0px;top:234px;width:96px;height:18px;overflow:hidden"><div class="t" style="left:23px;top:2px;font-size:12px;letter-spacing:-0.2px;color:#000">Riser</div></div>
<div class="a" style="left:0px;top:256px;width:96px;height:18px;overflow:hidden"><div class="t" style="left:23px;top:2px;font-size:12px;letter-spacing:-0.2px;color:#000">Run</div></div>
<div class="a" style="left:0px;top:284px;width:96px;height:18px;overflow:hidden"><div class="t" style="left:23px;top:2px;font-size:12px;letter-spacing:-0.2px;color:#000">Set Work Plan</div></div>
<div class="a" style="left:0px;top:306px;width:96px;height:18px;overflow:hidden"><div class="t" style="left:23px;top:2px;font-size:12px;letter-spacing:-0.2px;color:#000">Stairs Properti</div></div>
<div class="a" style="left:0px;top:328px;width:96px;height:18px;overflow:hidden"><div class="t" style="left:23px;top:2px;font-size:12px;letter-spacing:-0.2px;color:#a0a0a0">Railings Type</div></div>
<div class="a" style="left:0px;top:356px;width:96px;height:18px;overflow:hidden"><div class="t" style="left:23px;top:2px;font-size:12px;letter-spacing:-0.2px;color:#000">Finish Sketch</div></div>
<div class="a" style="left:0px;top:378px;width:96px;height:18px;overflow:hidden"><div class="t" style="left:23px;top:2px;font-size:12px;letter-spacing:-0.2px;color:#000">Quit Sketch</div></div>
<div class="a" style="left:2px;top:277px;width:92px;height:1px;background:#a0a0a0"></div>
<div class="a" style="left:2px;top:278px;width:92px;height:1px;background:#fff"></div>
<div class="a" style="left:2px;top:349px;width:92px;height:1px;background:#a0a0a0"></div>
<div class="a" style="left:2px;top:350px;width:92px;height:1px;background:#fff"></div>
<svg class="a" style="left:7px;top:147px;" width="12" height="17" viewBox="0 0 12 17" shape-rendering="crispEdges"><path d="M1.5,0.5 L1.5,13.5 L4.5,10.5 L7,15.5 L9,14.5 L6.8,9.5 L10.5,9.5 Z" fill="#fff" stroke="#00008a" stroke-width="1"/></svg>
<svg class="a" style="left:3px;top:170px;" width="17" height="13" viewBox="0 0 17 13" shape-rendering="crispEdges"><path d="M1,1 L3,3 M15,1 L13,3 M1,3 L3,1 M15,3 L13,1" stroke="#000"/><rect x="1" y="2" width="15" height="1" fill="#000"/><rect x="1" y="1" width="1" height="6" fill="#000"/><rect x="15" y="1" width="1" height="6" fill="#000"/><rect x="3" y="9" width="11" height="3" fill="none" stroke="#00008a"/></svg>
<svg class="a" style="left:3px;top:192px;" width="17" height="13" viewBox="0 0 17 13" shape-rendering="crispEdges"><path d="M5.5,0.5 L16.5,0.5 L11.5,12.5 L0.5,12.5 Z" fill="none" stroke="#a0a0a0"/></svg>
<svg class="a" style="left:4px;top:211px;" width="16" height="16" viewBox="0 0 16 16" shape-rendering="crispEdges"><path d="M0.5,0.5 L5.5,0.5 L5.5,9.5 L14.5,9.5 L14.5,14.5 L0.5,14.5 Z" fill="#fff" stroke="#00008a"/><path d="M7.5,0.5 L7.5,5.5 L13,5.5" fill="none" stroke="#000"/><path d="M11,3 L14,5.5 L11,8" fill="none" stroke="#000"/></svg>
<svg class="a" style="left:4px;top:234px;" width="16" height="16" viewBox="0 0 16 16" shape-rendering="crispEdges"><path d="M0.5,0.5 L5.5,0.5 L5.5,9.5 L14.5,9.5 L14.5,14.5 L0.5,14.5 Z" fill="#fff" stroke="#888"/><path d="M1,3.5 H5 M1,5.5 H5 M1,8.5 H5" stroke="#00008a"/><path d="M5.5,10 V14 M8.5,10 V14 M11.5,10 V14" stroke="#00008a"/><path d="M7.5,0.5 L7.5,5.5 L13,5.5" fill="none" stroke="#000"/><path d="M11,3 L14,5.5 L11,8" fill="none" stroke="#000"/></svg>
<svg class="a" style="left:4px;top:256px;" width="16" height="16" viewBox="0 0 16 16" shape-rendering="crispEdges"><path d="M0.5,0.5 L5.5,0.5 L5.5,9.5 L14.5,9.5 L14.5,14.5 L0.5,14.5 Z" fill="#fff" stroke="#00008a"/><path d="M1,3.5 H5 M1,5.5 H5 M1,8.5 H5" stroke="#00008a"/><path d="M5.5,10 V14 M8.5,10 V14 M11.5,10 V14" stroke="#00008a"/><path d="M7.5,0.5 L7.5,5.5 L13,5.5" fill="none" stroke="#000"/><path d="M11,3 L14,5.5 L11,8" fill="none" stroke="#000"/></svg>
<svg class="a" style="left:3px;top:285px;" width="16" height="14" viewBox="0 0 16 14"><path d="M5,1 L15,1 L10,12 L1,12 Z" fill="#f4f4f4" stroke="#1a8a1a" stroke-width="1"/><path d="M6,4 L13,11 M6,4 L6,8 M6,4 L10,4" stroke="#000" stroke-width="1.2" fill="none"/></svg>
<svg class="a" style="left:3px;top:306px;" width="16" height="17" viewBox="0 0 16 17"><path d="M4,1 L12,1 L14,9 L6,10 Z" fill="#fff" stroke="#00008a"/><circle cx="6" cy="4" r="0.7" fill="#c00"/><circle cx="7" cy="6" r="0.7" fill="#c00"/><path d="M1,9 Q4,13 8,11 Q12,9 15,11 M1,12 Q4,15 8,13 Q12,11 15,13 M2,14 Q6,17 9,15 Q12,14 15,15" fill="none" stroke="#00008a" stroke-width="1.2"/></svg>
<svg class="a" style="left:3px;top:329px;" width="17" height="15" viewBox="0 0 17 15" shape-rendering="crispEdges"><path d="M0,2.5 H16 M0,5.5 H16 M0,8.5 H16 M0,11.5 H16 M3.5,0 V15 M13.5,0 V15" stroke="#a8a8a8"/></svg>
<svg class="a" style="left:4px;top:357px;" width="15" height="15" viewBox="0 0 15 15"><defs><radialGradient id="gg" cx="0.4" cy="0.35" r="0.7"><stop offset="0" stop-color="#a8f070"/><stop offset="0.6" stop-color="#3cb81c"/><stop offset="1" stop-color="#1e7a10"/></radialGradient></defs><circle cx="7.5" cy="7.5" r="7" fill="url(#gg)"/><path d="M3.5,7.5 L6.5,11 L12,2.5" fill="none" stroke="#fff" stroke-width="2.2"/></svg>
<svg class="a" style="left:4px;top:379px;" width="15" height="15" viewBox="0 0 15 15"><defs><radialGradient id="rg" cx="0.4" cy="0.35" r="0.7"><stop offset="0" stop-color="#ff8a7a"/><stop offset="0.6" stop-color="#e02a1a"/><stop offset="1" stop-color="#9a1208"/></radialGradient></defs><circle cx="7.5" cy="7.5" r="7" fill="url(#rg)"/><path d="M4.5,4 L10.5,11 M10.5,4 L4.5,11" fill="none" stroke="#fff" stroke-width="2.2"/></svg>
<div class="a" style="left:96px;top:122px;width:1px;height:866px;background:#e4e4e4"></div>
<div class="a" style="left:97px;top:122px;width:2px;height:866px;background:#fff"></div>
<div class="a" style="left:99px;top:122px;width:3px;height:866px;background:#f2f2f2"></div>
<div class="a" style="left:102px;top:122px;width:1px;height:866px;background:#9a9a9a"></div>
<div class="a" style="left:103px;top:122px;width:2px;height:866px;background:#444"></div>
<div class="a" style="left:105px;top:122px;width:148px;height:866px;background:#e2ebf6"></div>
<div class="a" style="left:253px;top:122px;width:1px;height:866px;background:#444"></div>
<div class="a" style="left:254px;top:122px;width:3px;height:866px;background:#fafafa"></div>
<div class="a" style="left:105px;top:122px;width:148px;height:21px;background:linear-gradient(#bccbdc,#d3dfec 60%,#dbe6f2)"></div>
<div class="t" style="left:107px;top:128px;font-size:12px;color:#44546c;letter-spacing:-0.1px">3D.rvt - Project browser</div>
<div class="a" style="left:236px;top:126px;width:13px;height:13px;border:1px solid #7f8fa8;border-radius:2px;background:linear-gradient(#e4ecf6,#cfdbea)"></div>
<svg class="a" style="left:238px;top:128px;" width="9" height="9" viewBox="0 0 9 9" shape-rendering="crispEdges"><path d="M1.5,1.5 L7.5,7.5 M7.5,1.5 L1.5,7.5" stroke="#404a5a" stroke-width="3.2"/><path d="M1.5,1.5 L7.5,7.5 M7.5,1.5 L1.5,7.5" stroke="#fff" stroke-width="1.4"/></svg>
<div class="a" style="left:107px;top:143px;width:144px;height:845px;background:#fff;border-top:1px solid #5a5a5a;border-left:2px solid #707070"></div>
<div class="a" style="left:249px;top:144px;width:1px;height:844px;background:#e4e4e4"></div>
<div class="a" style="left:251px;top:122px;width:2px;height:866px;background:#d8e4f2"></div>
<div class="t" style="left:151px;top:147px;font-size:11px;letter-spacing:-0.3px">Views (all)</div>
<div class="t" style="left:155px;top:163px;font-size:11px;letter-spacing:-0.3px">Floor Plans</div>
<div class="t" style="left:175px;top:179px;font-size:11px;letter-spacing:-0.3px">Cobertura</div>
<div class="t" style="left:175px;top:195px;font-size:11px;letter-spacing:-0.3px">Piso 0</div>
<div class="t" style="left:175px;top:211px;font-size:11px;letter-spacing:-0.3px">Piso 1</div>
<div class="a" style="left:172px;top:224px;width:25px;height:16px;background:#e6e6e6"></div>
<div class="t" style="left:175px;top:227px;font-size:11px;letter-spacing:-0.3px">Site</div>
<div class="t" style="left:155px;top:243px;font-size:11px;letter-spacing:-0.3px">Ceiling Plans</div>
<div class="t" style="left:175px;top:259px;font-size:11px;letter-spacing:-0.3px">Cobertura</div>
<div class="t" style="left:175px;top:275px;font-size:11px;letter-spacing:-0.3px">Piso 0</div>
<div class="t" style="left:175px;top:291px;font-size:11px;letter-spacing:-0.3px">Piso 1</div>
<div class="t" style="left:155px;top:307px;font-size:11px;letter-spacing:-0.3px">3D Views</div>
<div class="t" style="left:155px;top:323px;font-size:11px;letter-spacing:-0.3px">Elevations (Building</div>
<div class="t" style="left:175px;top:339px;font-size:11px;letter-spacing:-0.3px">Al&ccedil;. Posterior</div>
<div class="t" style="left:175px;top:355px;font-size:11px;letter-spacing:-0.3px">Al&ccedil;. Principal</div>
<div class="t" style="left:175px;top:371px;font-size:11px;letter-spacing:-0.3px">Al&ccedil;.Lat.Direito</div>
<div class="t" style="left:175px;top:387px;font-size:11px;letter-spacing:-0.3px">Al&ccedil;.Lat.Esquerd</div>
<div class="t" style="left:155px;top:403px;font-size:11px;letter-spacing:-0.3px">Sections (Building S</div>
<div class="t" style="left:175px;top:419px;font-size:11px;letter-spacing:-0.3px">Section 1</div>
<div class="t" style="left:151px;top:435px;font-size:11px;letter-spacing:-0.3px">Legends</div>
<div class="t" style="left:151px;top:451px;font-size:11px;letter-spacing:-0.3px">Schedules/Quantitie</div>
<div class="t" style="left:151px;top:467px;font-size:11px;letter-spacing:-0.3px">Sheets (all)</div>
<div class="t" style="left:151px;top:483px;font-size:11px;letter-spacing:-0.3px">Families</div>
<div class="t" style="left:151px;top:499px;font-size:11px;letter-spacing:-0.3px">Groups</div>
<div class="t" style="left:151px;top:515px;font-size:11px;letter-spacing:-0.3px">Revit Links</div>
<svg class="a" style="left:0px;top:0px;left:0;top:0" width="260" height="600" viewBox="0 0 260 600" shape-rendering="crispEdges"><path d="M117.5,157 V521" stroke="#a0a0a0" stroke-dasharray="1,1"/><path d="M137.5,159 V409" stroke="#a0a0a0" stroke-dasharray="1,1"/><path d="M157.5,176 V233" stroke="#a0a0a0" stroke-dasharray="1,1"/><path d="M157.5,256 V297" stroke="#a0a0a0" stroke-dasharray="1,1"/><path d="M157.5,336 V393" stroke="#a0a0a0" stroke-dasharray="1,1"/><path d="M157.5,416 V425" stroke="#a0a0a0" stroke-dasharray="1,1"/><path d="M118,152.5 H129" stroke="#a0a0a0" stroke-dasharray="1,1"/><path d="M138,168.5 H152" stroke="#a0a0a0" stroke-dasharray="1,1"/><path d="M158,184.5 H172" stroke="#a0a0a0" stroke-dasharray="1,1"/><path d="M158,200.5 H172" stroke="#a0a0a0" stroke-dasharray="1,1"/><path d="M158,216.5 H172" stroke="#a0a0a0" stroke-dasharray="1,1"/><path d="M158,232.5 H172" stroke="#a0a0a0" stroke-dasharray="1,1"/><path d="M138,248.5 H152" stroke="#a0a0a0" stroke-dasharray="1,1"/><path d="M158,264.5 H172" stroke="#a0a0a0" stroke-dasharray="1,1"/><path d="M158,280.5 H172" stroke="#a0a0a0" stroke-dasharray="1,1"/><path d="M158,296.5 H172" stroke="#a0a0a0" stroke-dasharray="1,1"/><path d="M138,312.5 H152" stroke="#a0a0a0" stroke-dasharray="1,1"/><path d="M138,328.5 H152" stroke="#a0a0a0" stroke-dasharray="1,1"/><path d="M158,344.5 H172" stroke="#a0a0a0" stroke-dasharray="1,1"/><path d="M158,360.5 H172" stroke="#a0a0a0" stroke-dasharray="1,1"/><path d="M158,376.5 H172" stroke="#a0a0a0" stroke-dasharray="1,1"/><path d="M158,392.5 H172" stroke="#a0a0a0" stroke-dasharray="1,1"/><path d="M138,408.5 H152" stroke="#a0a0a0" stroke-dasharray="1,1"/><path d="M158,424.5 H172" stroke="#a0a0a0" stroke-dasharray="1,1"/><path d="M118,440.5 H129" stroke="#a0a0a0" stroke-dasharray="1,1"/><path d="M118,456.5 H129" stroke="#a0a0a0" stroke-dasharray="1,1"/><path d="M118,472.5 H129" stroke="#a0a0a0" stroke-dasharray="1,1"/><path d="M118,488.5 H129" stroke="#a0a0a0" stroke-dasharray="1,1"/><path d="M118,504.5 H129" stroke="#a0a0a0" stroke-dasharray="1,1"/><path d="M118,520.5 H129" stroke="#a0a0a0" stroke-dasharray="1,1"/></svg>
<svg class="a" style="left:113px;top:148px;" width="9" height="9" viewBox="0 0 9 9" shape-rendering="crispEdges"><defs><linearGradient id="ebg" x1="0" y1="0" x2="0" y2="1"><stop offset="0" stop-color="#fff"/><stop offset="1" stop-color="#d8d8d8"/></linearGradient></defs><rect x="0.5" y="0.5" width="8" height="8" rx="1" fill="url(#ebg)" stroke="#8f8f8f"/><path d="M2,4.5 H7" stroke="#2a3a9a"/></svg>
<svg class="a" style="left:133px;top:164px;" width="9" height="9" viewBox="0 0 9 9" shape-rendering="crispEdges"><defs><linearGradient id="ebg" x1="0" y1="0" x2="0" y2="1"><stop offset="0" stop-color="#fff"/><stop offset="1" stop-color="#d8d8d8"/></linearGradient></defs><rect x="0.5" y="0.5" width="8" height="8" rx="1" fill="url(#ebg)" stroke="#8f8f8f"/><path d="M2,4.5 H7" stroke="#2a3a9a"/></svg>
<svg class="a" style="left:133px;top:244px;" width="9" height="9" viewBox="0 0 9 9" shape-rendering="crispEdges"><defs><linearGradient id="ebg" x1="0" y1="0" x2="0" y2="1"><stop offset="0" stop-color="#fff"/><stop offset="1" stop-color="#d8d8d8"/></linearGradient></defs><rect x="0.5" y="0.5" width="8" height="8" rx="1" fill="url(#ebg)" stroke="#8f8f8f"/><path d="M2,4.5 H7" stroke="#2a3a9a"/></svg>
<svg class="a" style="left:133px;top:308px;" width="9" height="9" viewBox="0 0 9 9" shape-rendering="crispEdges"><defs><linearGradient id="ebg" x1="0" y1="0" x2="0" y2="1"><stop offset="0" stop-color="#fff"/><stop offset="1" stop-color="#d8d8d8"/></linearGradient></defs><rect x="0.5" y="0.5" width="8" height="8" rx="1" fill="url(#ebg)" stroke="#8f8f8f"/><path d="M2,4.5 H7" stroke="#2a3a9a"/><path d="M4.5,2 V7" stroke="#2a3a9a"/></svg>
<svg class="a" style="left:133px;top:324px;" width="9" height="9" viewBox="0 0 9 9" shape-rendering="crispEdges"><defs><linearGradient id="ebg" x1="0" y1="0" x2="0" y2="1"><stop offset="0" stop-color="#fff"/><stop offset="1" stop-color="#d8d8d8"/></linearGradient></defs><rect x="0.5" y="0.5" width="8" height="8" rx="1" fill="url(#ebg)" stroke="#8f8f8f"/><path d="M2,4.5 H7" stroke="#2a3a9a"/></svg>
<svg class="a" style="left:133px;top:404px;" width="9" height="9" viewBox="0 0 9 9" shape-rendering="crispEdges"><defs><linearGradient id="ebg" x1="0" y1="0" x2="0" y2="1"><stop offset="0" stop-color="#fff"/><stop offset="1" stop-color="#d8d8d8"/></linearGradient></defs><rect x="0.5" y="0.5" width="8" height="8" rx="1" fill="url(#ebg)" stroke="#8f8f8f"/><path d="M2,4.5 H7" stroke="#2a3a9a"/></svg>
<svg class="a" style="left:113px;top:484px;" width="9" height="9" viewBox="0 0 9 9" shape-rendering="crispEdges"><defs><linearGradient id="ebg" x1="0" y1="0" x2="0" y2="1"><stop offset="0" stop-color="#fff"/><stop offset="1" stop-color="#d8d8d8"/></linearGradient></defs><rect x="0.5" y="0.5" width="8" height="8" rx="1" fill="url(#ebg)" stroke="#8f8f8f"/><path d="M2,4.5 H7" stroke="#2a3a9a"/><path d="M4.5,2 V7" stroke="#2a3a9a"/></svg>
<svg class="a" style="left:113px;top:500px;" width="9" height="9" viewBox="0 0 9 9" shape-rendering="crispEdges"><defs><linearGradient id="ebg" x1="0" y1="0" x2="0" y2="1"><stop offset="0" stop-color="#fff"/><stop offset="1" stop-color="#d8d8d8"/></linearGradient></defs><rect x="0.5" y="0.5" width="8" height="8" rx="1" fill="url(#ebg)" stroke="#8f8f8f"/><path d="M2,4.5 H7" stroke="#2a3a9a"/><path d="M4.5,2 V7" stroke="#2a3a9a"/></svg>
<svg class="a" style="left:129px;top:147px;" width="17" height="10" viewBox="0 0 17 10"><path d="M1,5 Q8,-2 16,5 Q8,12 1,5 Z" fill="#fff" stroke="#000" stroke-width="1.6"/><circle cx="8.5" cy="5" r="3" fill="#000"/><circle cx="9.5" cy="4" r="0.9" fill="#aaa"/></svg>
<svg class="a" style="left:129px;top:433px;" width="16" height="14" viewBox="0 0 16 14" shape-rendering="crispEdges"><rect x="0.5" y="0.5" width="15" height="13" fill="#fff" stroke="#000"/><rect x="2" y="2" width="3" height="3" fill="#000"/><path d="M6,3.5 H13 M6,6.5 H9 M10,6.5 H13 M6,9.5 H9 M10,9.5 H13 M6,11.5 H8" stroke="#000"/><path d="M2,7 L5,9 L2,11 Z" fill="#000"/></svg>
<svg class="a" style="left:130px;top:449px;" width="14" height="14" viewBox="0 0 14 14" shape-rendering="crispEdges"><rect x="0.5" y="0.5" width="13" height="13" fill="#fff" stroke="#000"/><path d="M3,2.5 H11 M1,4.5 H13 M1,7.5 H13 M1,10.5 H13 M5.5,4 V13 M9.5,4 V13" stroke="#000"/></svg>
<svg class="a" style="left:130px;top:466px;" width="14" height="12" viewBox="0 0 14 12" shape-rendering="crispEdges"><rect x="0.5" y="0.5" width="13" height="11" fill="#fff" stroke="#000"/><path d="M10.5,1 V11" stroke="#000"/><path d="M12,2 V10" stroke="#888" stroke-dasharray="1,1"/></svg>
<svg class="a" style="left:130px;top:481px;" width="15" height="15" viewBox="0 0 15 15"><rect x="1.5" y="4" width="3" height="10" rx="1.5" fill="#fff" stroke="#000" stroke-width="1.2"/><path d="M7.5,2.5 L13.5,0.8 L13.5,8.5 L7.5,10.5 Z M7.5,6.5 L13.5,4.7 M10.5,1.6 V9.5" fill="none" stroke="#000" stroke-width="1.1"/></svg>
<svg class="a" style="left:129px;top:496px;" width="16" height="16" viewBox="0 0 16 16" shape-rendering="crispEdges"><rect x="0.5" y="0.5" width="14" height="14" fill="none" stroke="#000" stroke-dasharray="2,1"/><rect x="2.5" y="2.5" width="4" height="5" fill="none" stroke="#000"/><rect x="8.5" y="2.5" width="4" height="10" fill="none" stroke="#000"/><rect x="2.5" y="9.5" width="4" height="3" fill="none" stroke="#000"/></svg>
<svg class="a" style="left:129px;top:515px;" width="15" height="10" viewBox="0 0 15 10" shape-rendering="crispEdges"><rect x="0.5" y="0.5" width="14" height="9" fill="#fff" stroke="#000"/></svg>
<div class="a" style="left:108px;top:972px;width:142px;height:16px;background:#eaeaea;border-top:1px solid #f6f6f6"></div>
<svg class="a" style="left:115px;top:976px;" width="5" height="8" viewBox="0 0 5 8" shape-rendering="crispEdges"><path d="M4,0 V8 L0,4 Z" fill="#333"/></svg>
<div class="a" style="left:127px;top:974px;width:75px;height:14px;background:linear-gradient(#f6f6f6,#e6e6e6 50%,#d4d4d4 51%,#dcdcdc);border:1px solid #8a8a8a;border-radius:2px"></div>
<svg class="a" style="left:160px;top:978px;" width="9" height="7" viewBox="0 0 9 7" shape-rendering="crispEdges"><path d="M1.5,0 V7 M4.5,0 V7 M7.5,0 V7" stroke="#444"/></svg>
<svg class="a" style="left:240px;top:976px;" width="5" height="8" viewBox="0 0 5 8" shape-rendering="crispEdges"><path d="M0,0 V8 L4,4 Z" fill="#333"/></svg>
<div class="a" style="left:257px;top:115px;width:998px;height:873px;background:#f0f0f0"></div>
<div class="a" style="left:260px;top:121px;width:995px;height:3px;background:linear-gradient(#b4b4b4,#6a6a6a 45%,#3c3c3c)"></div>
<div class="a" style="left:260px;top:121px;width:3px;height:867px;background:linear-gradient(90deg,#a0a0a0,#707070 40%,#404040)"></div>
<div class="a" style="left:263px;top:124px;width:6px;height:6px;background:#707070"></div>
<div class="a" style="left:263px;top:124px;width:339px;height:864px;background:#d7e4f2;border-left:1px solid #eef4fb;border-top-left-radius:6px"></div>
<div class="a" style="left:263px;top:124px;width:339px;height:28px;background:linear-gradient(#e6eef6 0,#e6eef6 1px,#bccbdb 1px,#c8d6e5 40%,#d8e5f2);border-top-left-radius:6px"></div>
<div class="t" style="left:292px;top:135px;font-size:12px;color:#384050;letter-spacing:-0.2px">3D.rvt - Floor Plan: Piso 0</div>
<div class="a" style="left:270px;top:151px;width:332px;height:2px;background:linear-gradient(#8a8a8a,#555)"></div>
<div class="a" style="left:270px;top:151px;width:2px;height:829px;background:linear-gradient(90deg,#8a8a8a,#606060)"></div>
<div class="a" style="left:272px;top:153px;width:330px;height:809px;background:#ffffff"></div>
<div class="a" style="left:272px;top:962px;width:330px;height:18px;background:#f0f0f0"></div>
<div class="a" style="left:272px;top:980px;width:330px;height:1px;background:#fff"></div>
<div class="t" style="left:296px;top:965px;font-size:11px;">1 : 100</div>
<div class="a" style="left:601px;top:123px;width:654px;height:865px;background:#b8d0ea;border-left:1px solid #000;border-top:1px solid #202020;border-top-left-radius:6px"></div>
<div class="a" style="left:602px;top:124px;width:653px;height:28px;background:linear-gradient(#f4f8fc 0,#f4f8fc 1px,#98b3d2 1px,#a6c0dd 40%,#b5cde8 70%,#c1d7ee);border-top-left-radius:5px"></div>
<div class="t" style="left:630px;top:135px;font-size:12px;color:#000">3D.rvt - 3D View: {3D}</div>
<div class="a" style="left:609px;top:151px;width:646px;height:2px;background:linear-gradient(#8a8a8a,#555)"></div>
<div class="a" style="left:609px;top:151px;width:2px;height:829px;background:#5a5a5a"></div>
<div class="a" style="left:611px;top:153px;width:644px;height:809px;background:#ffffff"></div>
<div class="a" style="left:611px;top:962px;width:644px;height:18px;background:#f0f0f0"></div>
<div class="a" style="left:611px;top:980px;width:644px;height:1px;background:#fff"></div>
<div class="a" style="left:602px;top:981px;width:653px;height:6px;background:#b8d0ea"></div>
<div class="a" style="left:602px;top:987px;width:653px;height:1px;background:#2ec4d6"></div>
<div class="t" style="left:636px;top:965px;font-size:11px;">1 : 100</div>
<svg class="a" style="left:0px;top:0px;left:0;top:0" width="1255" height="988" viewBox="0 0 1255 988"><line x1="446" y1="252.5" x2="559" y2="252.5" stroke="#000" stroke-width="1"/><line x1="446" y1="280.5" x2="559" y2="280.5" stroke="#000" stroke-width="1"/><line x1="446" y1="308.5" x2="559" y2="308.5" stroke="#000" stroke-width="1"/><line x1="446" y1="336.5" x2="559" y2="336.5" stroke="#000" stroke-width="1"/><line x1="446" y1="364.5" x2="559" y2="364.5" stroke="#000" stroke-width="1"/><line x1="446" y1="392.5" x2="559" y2="392.5" stroke="#000" stroke-width="1"/><line x1="446" y1="420.5" x2="559" y2="420.5" stroke="#000" stroke-width="1"/><line x1="446" y1="448.5" x2="559" y2="448.5" stroke="#000" stroke-width="1"/><line x1="446" y1="476.5" x2="559" y2="476.5" stroke="#000" stroke-width="1"/><line x1="446" y1="504.5" x2="559" y2="504.5" stroke="#000" stroke-width="1"/><line x1="446" y1="532.5" x2="559" y2="532.5" stroke="#000" stroke-width="1"/><line x1="446" y1="560.5" x2="559" y2="560.5" stroke="#000" stroke-width="1"/><line x1="446" y1="588.5" x2="559" y2="588.5" stroke="#000" stroke-width="1"/><line x1="446" y1="616.5" x2="559" y2="616.5" stroke="#000" stroke-width="1"/><line x1="446" y1="644.5" x2="559" y2="644.5" stroke="#000" stroke-width="1"/><line x1="446" y1="672.5" x2="559" y2="672.5" stroke="#000" stroke-width="1"/><line x1="446" y1="700.5" x2="559" y2="700.5" stroke="#000" stroke-width="1"/><line x1="345" y1="728.5" x2="559" y2="728.5" stroke="#000" stroke-width="1"/><line x1="502.5" y1="252" x2="502.5" y2="729" stroke="#0000ff" stroke-width="1"/><line x1="558.5" y1="252" x2="558.5" y2="729" stroke="#00ff00" stroke-width="1"/><path fill="none" stroke="#00ff00" stroke-width="1" d="M446.5,252 C446.39,253.33 445.96,257.33 445.83,260.0 C445.70,262.67 445.76,265.33 445.71,268.0 C445.66,270.67 445.60,273.33 445.53,276.0 C445.46,278.67 445.38,281.33 445.3,284.0 C445.22,286.67 445.13,289.33 445.03,292.0 C444.93,294.67 444.82,297.33 444.7,300.0 C444.58,302.67 444.46,305.33 444.33,308.0 C444.20,310.67 444.05,313.33 443.9,316.0 C443.75,318.67 443.59,321.33 443.42,324.0 C443.25,326.67 443.07,329.33 442.89,332.0 C442.70,334.67 442.51,337.33 442.31,340.0 C442.11,342.67 441.89,345.33 441.67,348.0 C441.45,350.67 441.23,353.33 440.99,356.0 C440.75,358.67 440.51,361.33 440.25,364.0 C439.99,366.67 439.72,369.33 439.45,372.0 C439.18,374.67 438.90,377.33 438.61,380.0 C438.32,382.67 438.01,385.33 437.7,388.0 C437.39,390.67 437.08,393.33 436.75,396.0 C436.42,398.67 436.08,401.33 435.73,404.0 C435.38,406.67 435.04,409.33 434.67,412.0 C434.31,414.67 433.93,417.33 433.54,420.0 C433.16,422.67 432.76,425.33 432.36,428.0 C431.96,430.67 431.55,433.33 431.13,436.0 C430.71,438.67 430.27,441.33 429.83,444.0 C429.39,446.67 428.94,449.33 428.48,452.0 C428.02,454.67 427.55,457.33 427.07,460.0 C426.59,462.67 426.11,465.33 425.61,468.0 C425.11,470.67 424.60,473.33 424.08,476.0 C423.56,478.67 423.04,481.33 422.5,484.0 C421.96,486.67 421.41,489.33 420.85,492.0 C420.29,494.67 419.73,497.33 419.15,500.0 C418.57,502.67 417.98,505.33 417.38,508.0 C416.78,510.67 416.18,513.33 415.56,516.0 C414.94,518.67 414.32,521.33 413.68,524.0 C413.04,526.67 412.39,529.33 411.73,532.0 C411.07,534.67 410.40,537.33 409.72,540.0 C409.04,542.67 408.35,545.33 407.65,548.0 C406.95,550.67 406.24,553.33 405.52,556.0 C404.80,558.67 404.06,561.33 403.32,564.0 C402.58,566.67 401.83,569.33 401.07,572.0 C400.31,574.67 399.52,577.33 398.74,580.0 C397.96,582.67 397.17,585.33 396.36,588.0 C395.56,590.67 394.74,593.33 393.91,596.0 C393.08,598.67 392.24,601.33 391.39,604.0 C390.54,606.67 389.68,609.33 388.81,612.0 C387.94,614.67 387.06,617.33 386.17,620.0 C385.28,622.67 384.38,625.33 383.46,628.0 C382.54,630.67 381.62,633.33 380.68,636.0 C379.74,638.67 378.79,641.33 377.83,644.0 C376.87,646.67 375.90,649.33 374.92,652.0 C373.94,654.67 372.95,657.33 371.95,660.0 C370.95,662.67 369.93,665.33 368.9,668.0 C367.87,670.67 366.83,673.33 365.78,676.0 C364.73,678.67 363.67,681.33 362.6,684.0 C361.53,686.67 360.45,689.33 359.35,692.0 C358.25,694.67 357.15,697.33 356.03,700.0 C354.91,702.67 353.78,705.33 352.64,708.0 C351.50,710.67 350.35,713.33 349.18,716.0 C348.01,718.67 346.40,721.92 345.64,724.0 C344.88,726.08 344.77,727.75 344.6,728.5"/></svg>
<div class="t" style="left:344px;top:733px;font-size:9px;color:#a8a8a8;letter-spacing:0.3px">18 RISERS CREATED, 2 REMAINING</div>
<svg class="a" style="left:0px;top:0px;left:0;top:0" width="1255" height="988" viewBox="0 0 1255 988"><line x1="745.4" y1="599.3" x2="721.4" y2="646.3" stroke="#000" stroke-width="1"/><line x1="769.0" y1="602.2" x2="745.0" y2="649.2" stroke="#000" stroke-width="1"/><line x1="792.7" y1="605.1" x2="768.7" y2="652.1" stroke="#000" stroke-width="1"/><line x1="816.3" y1="608.0" x2="792.3" y2="655.0" stroke="#000" stroke-width="1"/><line x1="840.0" y1="610.9" x2="816.0" y2="657.9" stroke="#000" stroke-width="1"/><line x1="863.6" y1="613.8" x2="839.6" y2="660.8" stroke="#000" stroke-width="1"/><line x1="887.3" y1="616.7" x2="863.3" y2="663.7" stroke="#000" stroke-width="1"/><line x1="910.9" y1="619.5" x2="886.9" y2="666.5" stroke="#000" stroke-width="1"/><line x1="934.6" y1="622.4" x2="910.6" y2="669.4" stroke="#000" stroke-width="1"/><line x1="958.2" y1="625.3" x2="934.2" y2="672.3" stroke="#000" stroke-width="1"/><line x1="981.9" y1="628.2" x2="957.9" y2="675.2" stroke="#000" stroke-width="1"/><line x1="1005.5" y1="631.1" x2="981.5" y2="678.1" stroke="#000" stroke-width="1"/><line x1="1029.2" y1="634.0" x2="1005.2" y2="681.0" stroke="#000" stroke-width="1"/><line x1="1052.8" y1="636.9" x2="1028.8" y2="683.9" stroke="#000" stroke-width="1"/><line x1="1076.5" y1="639.8" x2="1052.5" y2="686.8" stroke="#000" stroke-width="1"/><line x1="1100.2" y1="642.7" x2="1076.2" y2="689.7" stroke="#000" stroke-width="1"/><line x1="1123.8" y1="645.6" x2="1099.8" y2="692.6" stroke="#000" stroke-width="1"/><line x1="1147.4" y1="648.5" x2="1103" y2="736" stroke="#000" stroke-width="1"/><line x1="733.3" y1="623.2" x2="1136.5" y2="671.7" stroke="#0000ff" stroke-width="1.1"/><line x1="745.4" y1="599.3" x2="1147" y2="648.4" stroke="#00ff00" stroke-width="1.1"/><path fill="none" stroke="#00ff00" stroke-width="1.1" d="M721.0,646.26 C722.67,646.47 727.67,647.07 731.0,647.49 C734.33,647.91 737.67,648.33 741.0,648.77 C744.33,649.21 747.67,649.65 751.0,650.11 C754.33,650.57 757.67,651.03 761.0,651.51 C764.33,651.99 767.67,652.47 771.0,652.97 C774.33,653.47 777.67,653.97 781.0,654.49 C784.33,655.01 787.67,655.53 791.0,656.07 C794.33,656.61 797.67,657.16 801.0,657.71 C804.33,658.26 807.67,658.83 811.0,659.4 C814.33,659.97 817.67,660.56 821.0,661.16 C824.33,661.76 827.67,662.36 831.0,662.98 C834.33,663.60 837.67,664.22 841.0,664.86 C844.33,665.50 847.67,666.14 851.0,666.8 C854.33,667.46 857.67,668.12 861.0,668.8 C864.33,669.47 867.67,670.15 871.0,670.85 C874.33,671.55 877.67,672.25 881.0,672.97 C884.33,673.69 887.67,674.41 891.0,675.15 C894.33,675.88 897.67,676.62 901.0,677.38 C904.33,678.13 907.67,678.90 911.0,679.68 C914.33,680.46 917.67,681.24 921.0,682.04 C924.33,682.84 927.67,683.63 931.0,684.45 C934.33,685.27 937.67,686.09 941.0,686.93 C944.33,687.76 947.67,688.61 951.0,689.46 C954.33,690.32 957.67,691.18 961.0,692.06 C964.33,692.93 967.67,693.82 971.0,694.71 C974.33,695.61 977.67,696.51 981.0,697.43 C984.33,698.34 987.67,699.27 991.0,700.2 C994.33,701.13 997.67,702.08 1001.0,703.03 C1004.33,703.98 1007.67,704.95 1011.0,705.93 C1014.33,706.90 1017.67,707.89 1021.0,708.88 C1024.33,709.87 1027.67,710.88 1031.0,711.89 C1034.33,712.90 1037.67,713.94 1041.0,714.97 C1044.33,716.00 1047.67,717.05 1051.0,718.1 C1054.33,719.15 1057.67,720.22 1061.0,721.29 C1064.33,722.36 1067.67,723.45 1071.0,724.54 C1074.33,725.63 1077.67,726.74 1081.0,727.85 C1084.33,728.96 1087.67,730.09 1091.0,731.22 C1094.33,732.36 1099.00,733.86 1101.0,734.66 C1103.00,735.46 1102.67,735.78 1103,736"/></svg>
<svg class="a" style="left:272px;top:132px;" width="16" height="16" viewBox="0 0 16 16" shape-rendering="crispEdges"><path d="M0.5,0.5 H10 L15.5,6 V15.5 H0.5 Z" fill="#f4f4f4" stroke="#7a7a7a"/><path d="M10,0.5 L15.5,6 H10 Z" fill="#b03aa0"/><rect x="1" y="8" width="14" height="7" fill="#b03aa0"/><path d="M1,7.5 H15" stroke="#707070" stroke-dasharray="2,1"/></svg>
<div class="t" style="left:274px;top:140px;font-size:7px;color:#fff;font-weight:bold;letter-spacing:0.3px">RVT</div>
<svg class="a" style="left:611px;top:132px;" width="16" height="16" viewBox="0 0 16 16" shape-rendering="crispEdges"><path d="M0.5,0.5 H10 L15.5,6 V15.5 H0.5 Z" fill="#f4f4f4" stroke="#7a7a7a"/><path d="M10,0.5 L15.5,6 H10 Z" fill="#b03aa0"/><rect x="1" y="8" width="14" height="7" fill="#b03aa0"/><path d="M1,7.5 H15" stroke="#707070" stroke-dasharray="2,1"/></svg>
<div class="t" style="left:613px;top:140px;font-size:7px;color:#fff;font-weight:bold;letter-spacing:0.3px">RVT</div>
<div class="a" style="left:1179px;top:133px;width:27px;height:15px;background:linear-gradient(#d4e2f2,#bcd0e8 50%,#a8c0de 51%,#c0d6ee);border:1px solid #4a5a70;border-radius:3px;box-shadow:inset 0 0 0 1px rgba(255,255,255,0.7)"></div>
<div class="a" style="left:1187px;top:140px;width:11px;height:4px;background:#fff;border:1px solid #333;border-radius:1px"></div>
<div class="a" style="left:1209px;top:133px;width:27px;height:15px;background:linear-gradient(#d4e2f2,#bcd0e8 50%,#a8c0de 51%,#c0d6ee);border:1px solid #4a5a70;border-radius:3px;box-shadow:inset 0 0 0 1px rgba(255,255,255,0.7)"></div>
<div class="a" style="left:1217px;top:136px;width:11px;height:8px;background:#fff;border:2px solid #333;border-radius:1px"></div>
<div class="a" style="left:1220px;top:139px;width:5px;height:2px;background:#9ac0e0"></div>
<div class="a" style="left:1238px;top:133px;width:27px;height:15px;background:linear-gradient(#f0a898,#e07a60 45%,#c83a1a 55%,#d86a50);border:1px solid #5a1a10;border-radius:3px;box-shadow:inset 0 0 0 1px rgba(255,255,255,0.7)"></div>
<div class="t" style="left:1245px;top:134px;font-size:12px;color:#fff;font-weight:bold;text-shadow:0 0 1px #333">&#x2715;</div>
<div class="a" style="left:1249px;top:153px;width:6px;height:809px;background:#e8e8e8;border-left:1px solid #f4f4f4"></div>
<div class="a" style="left:1250px;top:550px;width:5px;height:14px;background:linear-gradient(90deg,#f4f4f4,#dcdcdc);border:1px solid #7a7a7a;border-right:none;border-radius:2px 0 0 2px"></div>
<svg class="a" style="left:354px;top:964px;" width="12" height="12" viewBox="0 0 12 12" shape-rendering="crispEdges"><rect x="0.5" y="0.5" width="10" height="10" fill="#fff" stroke="#000"/><path d="M2,2 h2 v2 h-2z M6,2 h2 v2 h-2z M4,4 h2 v2 h-2z M8,4 h1 v2 h-1z M2,6 h2 v2 h-2z M6,6 h2 v2 h-2z M4,8 h2 v1 h-2z" fill="#555"/></svg>
<svg class="a" style="left:373px;top:963px;" width="17" height="14" viewBox="0 0 17 14"><path d="M1,5 L8,2 L16,4 L16,9 L9,12 L1,10 Z" fill="#fff" stroke="#333"/><path d="M1,5 L9,7.5 L16,4 M9,7.5 V12" fill="none" stroke="#333"/></svg>
<svg class="a" style="left:393px;top:963px;" width="15" height="14" viewBox="0 0 15 14"><path d="M3,12 L3,6 Q4,1 10,2 L11,9 Q8,9 7,12 Z" fill="#fff" stroke="#888"/><path d="M2,13 H14" stroke="#bbb" stroke-width="2"/></svg>
<svg class="a" style="left:415px;top:963px;" width="14" height="15" viewBox="0 0 14 15" shape-rendering="crispEdges"><path d="M3.5,0 V11.5 H14 M0,3.5 H10.5 V15" fill="none" stroke="#0000d0" stroke-width="2"/><path d="M0,14 L13,1" stroke="#b00000" stroke-width="1.5"/></svg>
<svg class="a" style="left:436px;top:963px;" width="14" height="15" viewBox="0 0 14 15" shape-rendering="crispEdges"><path d="M3.5,3 V11.5 H14 M0,5.5 H10.5 V15" fill="none" stroke="#0000d0" stroke-width="2"/><circle cx="10" cy="2.5" r="2.5" fill="#999"/></svg>
<svg class="a" style="left:455px;top:965px;" width="17" height="11" viewBox="0 0 17 11"><path d="M0.5,3 Q2,7 4,6" fill="none" stroke="#222" stroke-width="1"/><ellipse cx="6.5" cy="6" rx="2.8" ry="2.3" fill="#e4f0f8" stroke="#222" stroke-width="1.1" transform="rotate(-20 6.5 6)"/><ellipse cx="12.5" cy="4.5" rx="3" ry="2.4" fill="#e4f0f8" stroke="#222" stroke-width="1.1" transform="rotate(-20 12.5 4.5)"/><path d="M9.2,5.2 Q9.6,4.2 10,4.8" fill="none" stroke="#222"/></svg>
<svg class="a" style="left:479px;top:963px;" width="9" height="15" viewBox="0 0 9 15"><circle cx="4.5" cy="5" r="4" fill="#e8f4fc" stroke="#556"/><rect x="2.5" y="9" width="4" height="5" fill="#aab" stroke="#556" stroke-width="0.6"/></svg>
<div class="a" style="left:496px;top:963px;width:105px;height:16px;background:#e8e8e8"></div>
<div class="a" style="left:496px;top:963px;width:17px;height:16px;background:#ececec"></div>
<svg class="a" style="left:501px;top:967px;" width="5" height="8" viewBox="0 0 5 8" shape-rendering="crispEdges"><path d="M4,0 V8 L0,4 Z" fill="#333"/></svg>
<div class="a" style="left:588px;top:963px;width:14px;height:15px;background:linear-gradient(#f4f4f4,#d8d8d8);border:1px solid #8a8a8a;border-radius:2px"></div>
<div class="a" style="left:272px;top:979px;width:329px;height:1px;background:#f8f8f8"></div>
<div class="a" style="left:262px;top:981px;width:339px;height:7px;background:#d7e4f2"></div>
<svg class="a" style="left:693px;top:966px;" width="12" height="11" viewBox="0 0 12 11" shape-rendering="crispEdges"><rect x="0.5" y="0.5" width="10" height="10" fill="#fff" stroke="#000"/><rect x="1" y="1" width="5" height="5" fill="#444"/><rect x="5" y="5" width="5" height="5" fill="#999"/></svg>
<svg class="a" style="left:712px;top:963px;" width="16" height="14" viewBox="0 0 16 14"><path d="M1,5 L8,2 L15,4 L15,9 L8,12 L1,10 Z" fill="#a8dcf4" stroke="#2a7ab8"/><path d="M1,5 L8,7.5 L15,4 M8,7.5 V12" fill="none" stroke="#2a7ab8"/><path d="M1,5 L8,2 L15,4 L8,7.5 Z" fill="#d4f0fc" stroke="#2a7ab8"/></svg>
<svg class="a" style="left:732px;top:963px;" width="15" height="14" viewBox="0 0 15 14"><path d="M3,12 L3,6 Q4,1 10,2 L11,9 Q8,9 7,12 Z" fill="#fff" stroke="#888"/><path d="M2,13 H14" stroke="#bbb" stroke-width="2"/></svg>
<svg class="a" style="left:752px;top:963px;" width="17" height="14" viewBox="0 0 17 14"><circle cx="8" cy="2" r="1.3" fill="#a0a0a0"/><path d="M3,5 Q8,2 13,5 Q14,11 8,13 Q2,11 3,5 Z" fill="#a0a0a0"/><path d="M3,6 L0,3 L1,2 L4,5" fill="#a0a0a0"/><path d="M13,5.5 Q17,5 15,9 L13,10" fill="none" stroke="#a0a0a0" stroke-width="1.6"/><path d="M8,5 V10" stroke="#fff" stroke-width="1.2"/></svg>
<svg class="a" style="left:775px;top:963px;" width="14" height="15" viewBox="0 0 14 15" shape-rendering="crispEdges"><path d="M3.5,0 V11.5 H14 M0,3.5 H10.5 V15" fill="none" stroke="#0000d0" stroke-width="2"/><path d="M0,14 L13,1" stroke="#b00000" stroke-width="1.5"/></svg>
<svg class="a" style="left:796px;top:963px;" width="14" height="15" viewBox="0 0 14 15" shape-rendering="crispEdges"><path d="M3.5,3 V11.5 H14 M0,5.5 H10.5 V15" fill="none" stroke="#0000d0" stroke-width="2"/><circle cx="10" cy="2.5" r="2.5" fill="#999"/></svg>
<svg class="a" style="left:815px;top:965px;" width="17" height="11" viewBox="0 0 17 11"><path d="M0.5,3 Q2,7 4,6" fill="none" stroke="#222" stroke-width="1"/><ellipse cx="6.5" cy="6" rx="2.8" ry="2.3" fill="#e4f0f8" stroke="#222" stroke-width="1.1" transform="rotate(-20 6.5 6)"/><ellipse cx="12.5" cy="4.5" rx="3" ry="2.4" fill="#e4f0f8" stroke="#222" stroke-width="1.1" transform="rotate(-20 12.5 4.5)"/><path d="M9.2,5.2 Q9.6,4.2 10,4.8" fill="none" stroke="#222"/></svg>
<svg class="a" style="left:839px;top:963px;" width="9" height="15" viewBox="0 0 9 15"><circle cx="4.5" cy="5" r="4" fill="#e8f4fc" stroke="#556"/><rect x="2.5" y="9" width="4" height="5" fill="#aab" stroke="#556" stroke-width="0.6"/></svg>
<div class="a" style="left:856px;top:963px;width:16px;height:16px;background:#e6e6e6"></div>
<svg class="a" style="left:861px;top:967px;" width="5" height="8" viewBox="0 0 5 8" shape-rendering="crispEdges"><path d="M4,0 V8 L0,4 Z" fill="#333"/></svg>
<div class="a" style="left:1043px;top:963px;width:16px;height:16px;background:linear-gradient(#f8f8f8,#d4d4d4);border:1px solid #7a7a7a;border-radius:2px"></div>
<svg class="a" style="left:1236px;top:967px;" width="5" height="8" viewBox="0 0 5 8" shape-rendering="crispEdges"><path d="M0,0 V8 L4,4 Z" fill="#333"/></svg>
<div class="a" style="left:601px;top:123px;width:1px;height:865px;background:#000"></div>
<svg class="a" style="left:0px;top:0px;left:0;top:0" width="1255" height="988" viewBox="0 0 1255 988"><defs><radialGradient id="sh" cx="0.5" cy="0.5" r="0.5"><stop offset="0" stop-color="#a8a8ac" stop-opacity="0.9"/><stop offset="0.6" stop-color="#d0d0d4" stop-opacity="0.5"/><stop offset="1" stop-color="#fff" stop-opacity="0"/></radialGradient><radialGradient id="rb" cx="0.5" cy="0.5" r="0.5"><stop offset="0.75" stop-color="#dfe2e7"/><stop offset="0.92" stop-color="#e4e6ea"/><stop offset="1" stop-color="#eef0f2" stop-opacity="0.3"/></radialGradient><filter id="bl" x="-20%" y="-20%" width="140%" height="140%"><feGaussianBlur stdDeviation="0.8"/></filter><linearGradient id="cf" x1="0" y1="0" x2="0" y2="1"><stop offset="0" stop-color="#eceef1"/><stop offset="1" stop-color="#dcdee3"/></linearGradient></defs><ellipse cx="1158.5" cy="273.5" rx="61" ry="32" fill="#e8eaee"/><ellipse cx="1158.5" cy="273.5" rx="59.5" ry="30.5" fill="#dfe2e7"/><ellipse cx="1158.5" cy="272.5" rx="48.5" ry="23.5" fill="#fcfcfc" stroke="#b2b6bc" stroke-width="1.6"/><ellipse cx="1157" cy="279" rx="34" ry="12" fill="url(#sh)"/><path d="M1128.4,229.7 L1142.4,209.3 L1187.2,214 L1178.5,234.9 Z" fill="#eceef1" stroke="#9a9ca2" stroke-dasharray="4,2" stroke-width="0.9"/><path d="M1178.5,234.9 L1187.2,214 L1185.5,251.3 L1177.4,278.6 Z" fill="#dcdee2" stroke="#9a9ca2" stroke-dasharray="4,2" stroke-width="0.9"/><path d="M1128.4,229.7 L1178.5,234.9 L1177.4,278.6 L1129,271.6 Z" fill="url(#cf)" stroke="#9a9ca2" stroke-dasharray="4,2" stroke-width="0.9"/><rect x="1137" y="227" width="32" height="6" fill="#e2e4e8" transform="rotate(5 1153 230)"/><text x="0" y="0" text-anchor="middle" font-family="Liberation Sans" font-weight="bold" font-size="12" fill="#9a9ca2" letter-spacing="-0.6" transform="translate(1153 259) rotate(5)">LEFT</text><text x="0" y="0" text-anchor="middle" font-family="Liberation Sans" font-weight="bold" font-size="8" fill="#a0a2a8" transform="translate(1161 222) rotate(-80)">TOP</text><text x="0" y="0" text-anchor="middle" font-family="Liberation Sans" font-weight="bold" font-size="7" fill="#a0a2a8" transform="translate(1183 254) rotate(-85)">N</text><text x="0" y="0" text-anchor="middle" font-family="Liberation Sans" font-weight="bold" font-size="14" fill="#a6aab2" transform="translate(1108 258) rotate(-75)">N</text><text x="0" y="0" text-anchor="middle" font-family="Liberation Sans" font-weight="bold" font-size="14" fill="#a6aab2" transform="translate(1222 278) rotate(-80)">S</text><text x="0" y="0" text-anchor="middle" font-family="Liberation Sans" font-weight="bold" font-size="16" fill="#a6aab2" transform="translate(1142 306) rotate(-35)">W</text></svg>
<svg class="a" style="left:0px;top:0px;left:0;top:0" width="1255" height="988" viewBox="0 0 1255 988"><defs><linearGradient id="wg" x1="0" y1="0" x2="1" y2="1"><stop offset="0" stop-color="#e2e2e2"/><stop offset="0.5" stop-color="#f6f6f6"/><stop offset="1" stop-color="#e0e0e0"/></linearGradient></defs><path d="M675,834 H727 Q736,834 736,843 V950 Q736,959 727,959 H675 Z" fill="url(#wg)" stroke="#b4b4b4"/><circle cx="675" cy="897.5" r="63.5" fill="url(#wg)" stroke="#a8a8a8" stroke-width="1.2"/><circle cx="675" cy="898" r="39" fill="none" stroke="#a8a8a8" stroke-width="1.2"/><path d="M675,859 V937 M636,898 H714" stroke="#a8a8a8" stroke-width="1.2"/><line x1="702.6" y1="925.6" x2="719.9" y2="942.4" stroke="#a8a8a8" stroke-width="1.2"/><line x1="647.4" y1="925.6" x2="630.1" y2="942.4" stroke="#a8a8a8" stroke-width="1.2"/><line x1="647.4" y1="870.4" x2="630.1" y2="852.6" stroke="#a8a8a8" stroke-width="1.2"/><line x1="702.6" y1="870.4" x2="719.9" y2="852.6" stroke="#a8a8a8" stroke-width="1.2"/><text x="675" y="852" font-size="11" font-family="Liberation Sans" font-weight="bold" fill="#8a8a8a" text-anchor="middle">ZOOM</text><text x="675" y="952" font-size="11" font-family="Liberation Sans" font-weight="bold" fill="#8a8a8a" text-anchor="middle">PAN</text><text x="0" y="0" font-size="10" font-family="Liberation Sans" font-weight="bold" fill="#8a8a8a" text-anchor="middle" transform="translate(630 897) rotate(-90)">ORBIT</text><text x="0" y="0" font-size="10" font-family="Liberation Sans" font-weight="bold" fill="#8a8a8a" text-anchor="middle" transform="translate(720 897) rotate(90)">REWIND</text><path id="pc" d="M649.5,898 A25.5,25.5 0 0,1 675,872.5" fill="none"/><path id="pw" d="M675,872.5 A25.5,25.5 0 0,1 700.5,898" fill="none"/><path id="pl" d="M642.5,898 A32.5,32.5 0 0,0 675,930.5" fill="none"/><path id="pu" d="M675,930.5 A32.5,32.5 0 0,0 707.5,898" fill="none"/><text font-family="Liberation Sans" font-weight="bold" fill="#8a8a8a" font-size="8"><textPath href="#pc" startOffset="50%" text-anchor="middle">CENTER</textPath></text><text font-family="Liberation Sans" font-weight="bold" fill="#8a8a8a" font-size="8"><textPath href="#pw" startOffset="50%" text-anchor="middle">WALK</textPath></text><text font-family="Liberation Sans" font-weight="bold" fill="#8a8a8a" font-size="8"><textPath href="#pl" startOffset="50%" text-anchor="middle">LOOK</textPath></text><text font-family="Liberation Sans" font-weight="bold" fill="#8a8a8a" font-size="8"><textPath href="#pu" startOffset="50%" text-anchor="middle">UP/DOWN</textPath></text><path d="M722,843 L730,851 M730,843 L722,851" stroke="#9a9a9a" stroke-width="1.2"/><circle cx="726" cy="949" r="4.5" fill="#eee" stroke="#a8a8a8"/><path d="M723.5,948 H728.5 L726,951 Z" fill="#888"/></svg>
</body></html>
